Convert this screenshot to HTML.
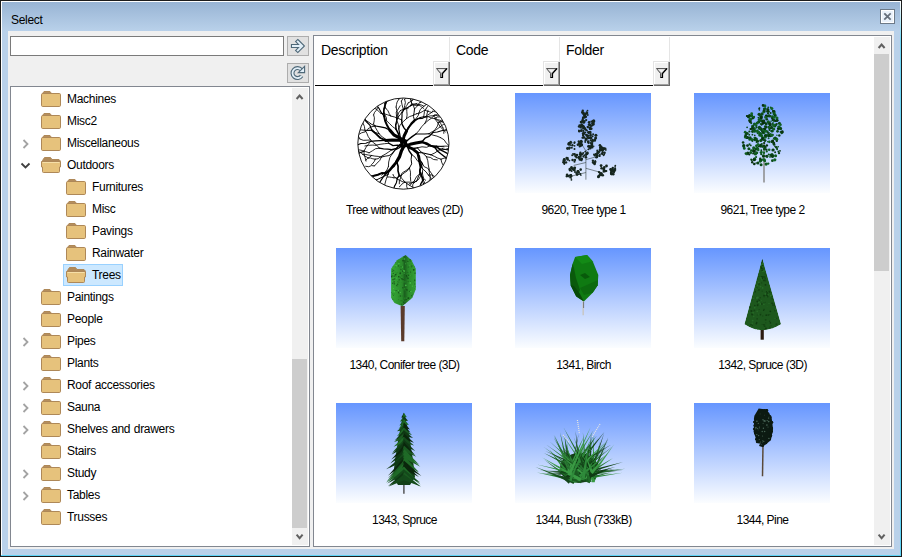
<!DOCTYPE html>
<html><head><meta charset="utf-8">
<style>
*{box-sizing:border-box;margin:0;padding:0}
html,body{width:902px;height:557px;overflow:hidden;background:#1c1c1c;font-family:"Liberation Sans",sans-serif;}
.a{position:absolute}
#win{position:absolute;left:0;top:0;width:902px;height:557px;background:#1c1c1c}
#wl{left:1px;top:1px;width:1px;height:555px;background:#fff}
#wt{left:1px;top:1px;width:900px;height:1px;background:#fff}
#wr{left:900px;top:1px;width:1px;height:555px;background:linear-gradient(#fff,#6fd8f7 40px,#5fd4f7)}
#wb{left:1px;top:555px;width:900px;height:1px;background:#5fd4f7}
#frame{left:2px;top:2px;width:898px;height:553px;background:#b9d1ea}
#title{left:2px;top:2px;width:898px;height:29px;background:linear-gradient(#98b4d4,#b9d1ea)}
#ttext{left:11px;top:13px;font-size:12px;color:#000;line-height:14px;letter-spacing:-0.3px}
#close{left:880px;top:9px;width:15px;height:15px;border:1px solid #6d7a88;background:#eaf2fb;box-shadow:inset 0 0 0 1px #fff}
#panel{left:8px;top:31px;width:886px;height:518px;background:#f0f0f0}
#search{left:10px;top:36px;width:274px;height:20px;border:1px solid #7a7a7a;background:#fff}
.btn{width:22px;height:20px;border:1px solid #adadad;background:#e1e1e1}
#tree{left:10px;top:86px;width:300px;height:461px;border:1px solid #828790;background:#fff}
#list{left:313px;top:35px;width:579px;height:512px;border:1px solid #828790;background:#fff}
.sb{background:#f0f0f0}
.thumb{background:#cdcdcd}
.tl{font-size:12px;line-height:22px;color:#000;white-space:nowrap;letter-spacing:-0.3px;word-spacing:0.5px}
.sel{width:60px;height:22px;background:#cce8ff;border:1px solid #99d1ff}
.hd{font-size:14px;line-height:16px;color:#000;white-space:nowrap;letter-spacing:-0.3px}
.sep{width:1px;background:#e5e5e5}
.hl{height:1px;background:#000}
.flt{width:17px;height:25px;background:#f0f0f0;border-left:1px solid #e3e3e3;border-top:1px solid #e3e3e3;box-shadow:inset -1px -1px 0 #696969, inset -2px -2px 0 #a0a0a0, inset 1px 1px 0 #fff}
.cap{font-size:12px;line-height:13px;color:#000;white-space:nowrap;text-align:center;width:179px;letter-spacing:-0.55px}
.img{width:136px;height:100px;background:linear-gradient(#6696ff,#fbfdff)}
.chev{fill:none;stroke:#606060;stroke-width:2}
</style></head><body>
<svg width="0" height="0" style="position:absolute">
<defs>
<symbol id="fc" viewBox="0 0 20 16">
<path d="M1.5 2.5 L3 0.5 H9 L10.5 2.5 Z" fill="#b58e5e" stroke="#ae8858" stroke-width="1" stroke-linejoin="round"/>
<rect x="0.5" y="2.5" width="19" height="13" rx="1.2" fill="#e6c27c" stroke="#ae8858"/>
</symbol>
<symbol id="fo" viewBox="0 0 20 16">
<path d="M1.5 3.5 L3.5 0.5 H9.5 L11 2.5 H18 L19 3.5 V6 H1 Z" fill="#b08a5a" stroke="#ae8858" stroke-width="1" stroke-linejoin="round"/>
<path d="M0.5 4.5 H19.5 V10 H18.5 V14.5 Q18.5 15.5 17.5 15.5 H2.5 Q1.5 15.5 1.5 14.5 V10 H0.5 Z" fill="#e6c27c" stroke="#ae8858"/>
<path d="M1.5 5.5 H18.5" stroke="#f6dfa8" stroke-width="1"/>
</symbol>
<symbol id="funnel" viewBox="0 0 17 25">
<path d="M3.5 7.5 H14 L9.5 12.5 V16.5 H7.5 V12.5 Z" fill="#a8a8a8" stroke="#4a4a4a" stroke-width="0.9" stroke-linejoin="miter"/>
<path d="M4.8 8.2 H12 L8.6 11.8 Z" fill="#f4f4f4"/>
<path d="M14 7.5 L9.5 12.5 V16.5 H7.5" fill="none" stroke="#000" stroke-width="1.2"/>
</symbol>
</defs>
</svg>
<div id="win">
<div class="a" id="frame"></div>
<div class="a" id="title"></div>
<div class="a" id="wl"></div><div class="a" id="wt"></div><div class="a" id="wr"></div><div class="a" id="wb"></div>
<div class="a" id="ttext">Select</div>
<div class="a" id="close"></div>
<svg class="a" style="left:880px;top:9px" width="15" height="15"><path d="M4.9 4.9 L10.1 10.1 M10.1 4.9 L4.9 10.1" stroke="#66707c" stroke-width="1.8" stroke-linecap="square"/></svg>
<div class="a" id="panel"></div>
<div class="a" id="search"></div>
<div class="a btn" style="left:287px;top:36px"></div>
<svg class="a" style="left:287px;top:36px" width="22" height="20">
<path d="M6 10 H14.5 M10.8 5.6 L15.2 10 L10.8 14.4" fill="none" stroke="#4e6878" stroke-width="4.2" stroke-linejoin="miter" stroke-linecap="square"/>
<path d="M6 10 H14.5 M10.8 5.6 L15.2 10 L10.8 14.4" fill="none" stroke="#e2eff8" stroke-width="2" stroke-linejoin="miter" stroke-linecap="square"/>
</svg>
<div class="a btn" style="left:287px;top:63px"></div>
<svg class="a" style="left:287px;top:63px" width="22" height="20">
<path d="M14.3 6.8 A5 5 0 1 0 14.6 12.9" fill="none" stroke="#4e6878" stroke-width="4"/>
<path d="M14.3 6.8 A5 5 0 1 0 14.6 12.9" fill="none" stroke="#e2eff8" stroke-width="1.8"/>
<path d="M11.3 9.6 H17.6 V3.3 Z" fill="#e2eff8" stroke="#4e6878" stroke-width="1.1" stroke-linejoin="miter"/>
</svg>
<div class="a" id="tree"></div>
<div class="a sb" style="left:292px;top:88px;width:16px;height:457px"></div>
<div class="a thumb" style="left:292px;top:359px;width:15px;height:169px"></div>
<svg class="a" style="left:292px;top:88px" width="16" height="17"><path class="chev" d="M4.6 11 L7.6 7.5 L10.6 11"/></svg>
<svg class="a" style="left:292px;top:528px" width="16" height="17"><path class="chev" d="M4.6 6.6 L7.6 10.1 L10.6 6.6"/></svg>
<svg class="a" style="left:41px;top:91px" width="20" height="16"><use href="#fc"/></svg>
<div class="a tl" style="left:67px;top:88px">Machines</div>
<svg class="a" style="left:41px;top:113px" width="20" height="16"><use href="#fc"/></svg>
<div class="a tl" style="left:67px;top:110px">Misc2</div>
<svg class="a" style="left:21px;top:138px" width="10" height="12"><path d="M2.5 2 L6.5 6 L2.5 10" fill="none" stroke="#a3a3a3" stroke-width="1.8"/></svg>
<svg class="a" style="left:41px;top:135px" width="20" height="16"><use href="#fc"/></svg>
<div class="a tl" style="left:67px;top:132px">Miscellaneous</div>
<svg class="a" style="left:20px;top:161px" width="12" height="10"><path d="M1.5 2.5 L5.5 6.5 L9.5 2.5" fill="none" stroke="#404040" stroke-width="1.8"/></svg>
<svg class="a" style="left:41px;top:157px" width="20" height="16"><use href="#fo"/></svg>
<div class="a tl" style="left:67px;top:154px">Outdoors</div>
<svg class="a" style="left:66px;top:179px" width="20" height="16"><use href="#fc"/></svg>
<div class="a tl" style="left:92px;top:176px">Furnitures</div>
<svg class="a" style="left:66px;top:201px" width="20" height="16"><use href="#fc"/></svg>
<div class="a tl" style="left:92px;top:198px">Misc</div>
<svg class="a" style="left:66px;top:223px" width="20" height="16"><use href="#fc"/></svg>
<div class="a tl" style="left:92px;top:220px">Pavings</div>
<svg class="a" style="left:66px;top:245px" width="20" height="16"><use href="#fc"/></svg>
<div class="a tl" style="left:92px;top:242px">Rainwater</div>
<div class="a sel" style="left:63px;top:264px"></div>
<svg class="a" style="left:66px;top:267px" width="20" height="16"><use href="#fo"/></svg>
<div class="a tl" style="left:92px;top:264px">Trees</div>
<svg class="a" style="left:41px;top:289px" width="20" height="16"><use href="#fc"/></svg>
<div class="a tl" style="left:67px;top:286px">Paintings</div>
<svg class="a" style="left:41px;top:311px" width="20" height="16"><use href="#fc"/></svg>
<div class="a tl" style="left:67px;top:308px">People</div>
<svg class="a" style="left:21px;top:336px" width="10" height="12"><path d="M2.5 2 L6.5 6 L2.5 10" fill="none" stroke="#a3a3a3" stroke-width="1.8"/></svg>
<svg class="a" style="left:41px;top:333px" width="20" height="16"><use href="#fc"/></svg>
<div class="a tl" style="left:67px;top:330px">Pipes</div>
<svg class="a" style="left:41px;top:355px" width="20" height="16"><use href="#fc"/></svg>
<div class="a tl" style="left:67px;top:352px">Plants</div>
<svg class="a" style="left:21px;top:380px" width="10" height="12"><path d="M2.5 2 L6.5 6 L2.5 10" fill="none" stroke="#a3a3a3" stroke-width="1.8"/></svg>
<svg class="a" style="left:41px;top:377px" width="20" height="16"><use href="#fc"/></svg>
<div class="a tl" style="left:67px;top:374px">Roof accessories</div>
<svg class="a" style="left:21px;top:402px" width="10" height="12"><path d="M2.5 2 L6.5 6 L2.5 10" fill="none" stroke="#a3a3a3" stroke-width="1.8"/></svg>
<svg class="a" style="left:41px;top:399px" width="20" height="16"><use href="#fc"/></svg>
<div class="a tl" style="left:67px;top:396px">Sauna</div>
<svg class="a" style="left:21px;top:424px" width="10" height="12"><path d="M2.5 2 L6.5 6 L2.5 10" fill="none" stroke="#a3a3a3" stroke-width="1.8"/></svg>
<svg class="a" style="left:41px;top:421px" width="20" height="16"><use href="#fc"/></svg>
<div class="a tl" style="left:67px;top:418px">Shelves and drawers</div>
<svg class="a" style="left:41px;top:443px" width="20" height="16"><use href="#fc"/></svg>
<div class="a tl" style="left:67px;top:440px">Stairs</div>
<svg class="a" style="left:21px;top:468px" width="10" height="12"><path d="M2.5 2 L6.5 6 L2.5 10" fill="none" stroke="#a3a3a3" stroke-width="1.8"/></svg>
<svg class="a" style="left:41px;top:465px" width="20" height="16"><use href="#fc"/></svg>
<div class="a tl" style="left:67px;top:462px">Study</div>
<svg class="a" style="left:21px;top:490px" width="10" height="12"><path d="M2.5 2 L6.5 6 L2.5 10" fill="none" stroke="#a3a3a3" stroke-width="1.8"/></svg>
<svg class="a" style="left:41px;top:487px" width="20" height="16"><use href="#fc"/></svg>
<div class="a tl" style="left:67px;top:484px">Tables</div>
<svg class="a" style="left:41px;top:509px" width="20" height="16"><use href="#fc"/></svg>
<div class="a tl" style="left:67px;top:506px">Trusses</div>
<div class="a" id="list"></div>
<div class="a sb" style="left:874px;top:37px;width:16px;height:508px"></div>
<div class="a thumb" style="left:874px;top:54px;width:15px;height:217px"></div>
<svg class="a" style="left:874px;top:37px" width="16" height="17"><path class="chev" d="M4.6 11 L7.6 7.5 L10.6 11"/></svg>
<svg class="a" style="left:874px;top:528px" width="16" height="17"><path class="chev" d="M4.6 6.6 L7.6 10.1 L10.6 6.6"/></svg>
<!-- header -->
<div class="a hd" style="left:321px;top:42px">Description</div>
<div class="a hd" style="left:456px;top:42px">Code</div>
<div class="a hd" style="left:566px;top:42px">Folder</div>
<div class="a sep" style="left:449px;top:37px;height:24px"></div>
<div class="a sep" style="left:559px;top:37px;height:24px"></div>
<div class="a sep" style="left:669px;top:37px;height:24px"></div>
<div class="a hl" style="left:315px;top:85px;width:354px"></div>
<div class="a flt" style="left:433px;top:61px"></div>
<svg class="a" style="left:433px;top:61px" width="17" height="25"><use href="#funnel"/></svg>
<div class="a flt" style="left:543px;top:61px"></div>
<svg class="a" style="left:543px;top:61px" width="17" height="25"><use href="#funnel"/></svg>
<div class="a flt" style="left:653px;top:61px"></div>
<svg class="a" style="left:653px;top:61px" width="17" height="25"><use href="#funnel"/></svg>
<svg class="a img0" style="left:336px;top:93px" width="136" height="100"><g transform="translate(18,1)"><clipPath id="cc"><circle cx="49.4" cy="49.6" r="45.4"/></clipPath><g clip-path="url(#cc)"><polyline points="50.2,46.8 45.1,43.7 39.8,40.8 35.9,36.2" fill="none" stroke="#000" stroke-width="3.20" stroke-linejoin="round" stroke-linecap="round"/><polyline points="35.9,36.2 33.3,31.8 31.2,27.1 30.1,22.1" fill="none" stroke="#000" stroke-width="1.99" stroke-linejoin="round" stroke-linecap="round"/><polyline points="30.1,22.1 29.7,17.6 30.5,13.1 32.0,8.8" fill="none" stroke="#000" stroke-width="1.52" stroke-linejoin="round" stroke-linecap="round"/><polyline points="32.0,8.8 33.8,5.5 37.1,3.6 39.3,0.5" fill="none" stroke="#000" stroke-width="1.17" stroke-linejoin="round" stroke-linecap="round"/><polyline points="32.0,8.8 31.6,4.5 31.8,0.1 31.7,-4.3" fill="none" stroke="#000" stroke-width="0.85" stroke-linejoin="round" stroke-linecap="round"/><polyline points="30.1,22.1 27.4,18.7 25.3,14.9 22.8,11.4" fill="none" stroke="#000" stroke-width="1.08" stroke-linejoin="round" stroke-linecap="round"/><polyline points="22.8,11.4 21.5,8.3 20.4,5.2 18.8,2.3" fill="none" stroke="#000" stroke-width="0.85" stroke-linejoin="round" stroke-linecap="round"/><polyline points="22.8,11.4 19.9,9.4 16.6,8.0 13.3,6.6" fill="none" stroke="#000" stroke-width="0.85" stroke-linejoin="round" stroke-linecap="round"/><polyline points="22.8,11.4 21.7,7.3 20.4,3.2 18.0,-0.3" fill="none" stroke="#000" stroke-width="0.85" stroke-linejoin="round" stroke-linecap="round"/><polyline points="35.9,36.2 31.4,33.9 26.5,32.8 21.5,32.0" fill="none" stroke="#000" stroke-width="1.22" stroke-linejoin="round" stroke-linecap="round"/><polyline points="21.5,32.0 17.7,30.4 14.4,28.0 11.0,25.7" fill="none" stroke="#000" stroke-width="0.97" stroke-linejoin="round" stroke-linecap="round"/><polyline points="11.0,25.7 10.9,22.3 10.1,19.0 10.6,15.7" fill="none" stroke="#000" stroke-width="0.85" stroke-linejoin="round" stroke-linecap="round"/><polyline points="11.0,25.7 7.8,24.6 4.5,24.2 1.4,23.1" fill="none" stroke="#000" stroke-width="0.85" stroke-linejoin="round" stroke-linecap="round"/><polyline points="21.5,32.0 17.4,32.8 13.9,34.8 11.1,37.8" fill="none" stroke="#000" stroke-width="0.85" stroke-linejoin="round" stroke-linecap="round"/><polyline points="11.1,37.8 7.4,38.9 4.1,40.9 0.4,42.1" fill="none" stroke="#000" stroke-width="0.85" stroke-linejoin="round" stroke-linecap="round"/><polyline points="51.6,46.7 44.9,46.2 38.3,46.0 31.6,46.4" fill="none" stroke="#000" stroke-width="3.00" stroke-linejoin="round" stroke-linecap="round"/><polyline points="31.6,46.4 26.4,44.0 22.3,40.1 17.9,36.3" fill="none" stroke="#000" stroke-width="1.88" stroke-linejoin="round" stroke-linecap="round"/><polyline points="17.9,36.3 15.8,31.1 11.9,27.2 9.0,22.4" fill="none" stroke="#000" stroke-width="1.21" stroke-linejoin="round" stroke-linecap="round"/><polyline points="17.9,36.3 12.5,36.5 7.2,35.9 1.8,36.2" fill="none" stroke="#000" stroke-width="0.85" stroke-linejoin="round" stroke-linecap="round"/><polyline points="31.6,46.4 26.6,46.6 21.5,46.9 16.5,47.4" fill="none" stroke="#000" stroke-width="1.24" stroke-linejoin="round" stroke-linecap="round"/><polyline points="16.5,47.4 11.9,49.2 6.9,49.5 2.3,51.3" fill="none" stroke="#000" stroke-width="1.02" stroke-linejoin="round" stroke-linecap="round"/><polyline points="16.5,47.4 14.2,50.6 11.8,53.7 10.0,57.2" fill="none" stroke="#000" stroke-width="0.85" stroke-linejoin="round" stroke-linecap="round"/><polyline points="10.0,57.2 6.7,58.3 4.0,60.6 1.2,62.6" fill="none" stroke="#000" stroke-width="0.85" stroke-linejoin="round" stroke-linecap="round"/><polyline points="10.0,57.2 10.1,60.6 11.2,63.8 12.0,67.1" fill="none" stroke="#000" stroke-width="0.85" stroke-linejoin="round" stroke-linecap="round"/><polyline points="10.0,57.2 7.3,58.5 4.3,59.0 1.6,60.4" fill="none" stroke="#000" stroke-width="0.85" stroke-linejoin="round" stroke-linecap="round"/><polyline points="47.2,52.2 48.8,47.1 50.1,42.0 52.5,37.2" fill="none" stroke="#000" stroke-width="3.00" stroke-linejoin="round" stroke-linecap="round"/><polyline points="52.5,37.2 54.9,33.3 57.3,29.4 60.5,26.1" fill="none" stroke="#000" stroke-width="1.87" stroke-linejoin="round" stroke-linecap="round"/><polyline points="60.5,26.1 64.1,24.6 68.0,24.5 71.5,22.8" fill="none" stroke="#000" stroke-width="1.17" stroke-linejoin="round" stroke-linecap="round"/><polyline points="71.5,22.8 74.6,22.8 77.5,24.2 80.7,24.6" fill="none" stroke="#000" stroke-width="0.85" stroke-linejoin="round" stroke-linecap="round"/><polyline points="80.7,24.6 82.6,27.1 84.4,29.8 86.2,32.5" fill="none" stroke="#000" stroke-width="0.85" stroke-linejoin="round" stroke-linecap="round"/><polyline points="86.2,32.5 87.7,34.5 89.7,36.1 91.3,38.1" fill="none" stroke="#000" stroke-width="0.85" stroke-linejoin="round" stroke-linecap="round"/><polyline points="80.7,24.6 83.2,23.0 86.3,22.9 88.8,21.1" fill="none" stroke="#000" stroke-width="0.85" stroke-linejoin="round" stroke-linecap="round"/><polyline points="80.7,24.6 83.4,25.6 86.3,26.3 88.4,28.3" fill="none" stroke="#000" stroke-width="0.85" stroke-linejoin="round" stroke-linecap="round"/><polyline points="71.5,22.8 73.9,20.8 76.6,19.3 78.9,17.1" fill="none" stroke="#000" stroke-width="0.85" stroke-linejoin="round" stroke-linecap="round"/><polyline points="78.9,17.1 81.5,17.9 84.1,18.8 86.7,17.9" fill="none" stroke="#000" stroke-width="0.85" stroke-linejoin="round" stroke-linecap="round"/><polyline points="60.5,26.1 59.4,22.4 60.1,18.6 60.5,14.8" fill="none" stroke="#000" stroke-width="0.98" stroke-linejoin="round" stroke-linecap="round"/><polyline points="60.5,14.8 62.7,12.9 64.1,10.4 66.1,8.3" fill="none" stroke="#000" stroke-width="0.85" stroke-linejoin="round" stroke-linecap="round"/><polyline points="66.1,8.3 67.9,7.0 69.6,5.5 71.5,4.3" fill="none" stroke="#000" stroke-width="0.85" stroke-linejoin="round" stroke-linecap="round"/><polyline points="66.1,8.3 68.8,7.4 70.6,5.3 73.0,3.7" fill="none" stroke="#000" stroke-width="0.85" stroke-linejoin="round" stroke-linecap="round"/><polyline points="60.5,14.8 59.3,11.3 57.3,8.3 56.3,4.8" fill="none" stroke="#000" stroke-width="0.85" stroke-linejoin="round" stroke-linecap="round"/><polyline points="52.5,37.2 50.0,33.8 48.0,30.1 47.7,25.9" fill="none" stroke="#000" stroke-width="1.40" stroke-linejoin="round" stroke-linecap="round"/><polyline points="47.7,25.9 48.0,22.6 48.0,19.2 49.5,16.2" fill="none" stroke="#000" stroke-width="1.15" stroke-linejoin="round" stroke-linecap="round"/><polyline points="49.5,16.2 51.8,14.8 53.9,13.2 56.2,11.9" fill="none" stroke="#000" stroke-width="0.87" stroke-linejoin="round" stroke-linecap="round"/><polyline points="56.2,11.9 58.6,11.1 61.0,11.3 63.5,11.3" fill="none" stroke="#000" stroke-width="0.85" stroke-linejoin="round" stroke-linecap="round"/><polyline points="63.5,11.3 65.9,11.6 67.7,13.0 69.6,14.4" fill="none" stroke="#000" stroke-width="0.85" stroke-linejoin="round" stroke-linecap="round"/><polyline points="56.2,11.9 57.5,9.9 57.5,7.6 58.9,5.7" fill="none" stroke="#000" stroke-width="0.85" stroke-linejoin="round" stroke-linecap="round"/><polyline points="58.9,5.7 60.3,4.5 62.0,3.8 63.3,2.5" fill="none" stroke="#000" stroke-width="0.85" stroke-linejoin="round" stroke-linecap="round"/><polyline points="56.2,11.9 58.1,10.3 60.6,10.2 62.9,9.4" fill="none" stroke="#000" stroke-width="0.85" stroke-linejoin="round" stroke-linecap="round"/><polyline points="49.5,16.2 48.7,13.2 47.9,10.1 47.4,7.0" fill="none" stroke="#000" stroke-width="0.85" stroke-linejoin="round" stroke-linecap="round"/><polyline points="47.4,7.0 48.8,4.8 49.8,2.3 51.2,0.0" fill="none" stroke="#000" stroke-width="0.85" stroke-linejoin="round" stroke-linecap="round"/><polyline points="49.5,16.2 51.1,13.8 52.8,11.4 54.2,8.9" fill="none" stroke="#000" stroke-width="0.85" stroke-linejoin="round" stroke-linecap="round"/><polyline points="54.2,8.9 56.7,7.6 58.3,5.3 59.9,2.9" fill="none" stroke="#000" stroke-width="0.85" stroke-linejoin="round" stroke-linecap="round"/><polyline points="47.7,25.9 44.1,24.4 40.5,23.0 36.8,22.0" fill="none" stroke="#000" stroke-width="0.85" stroke-linejoin="round" stroke-linecap="round"/><polyline points="36.8,22.0 35.2,19.5 34.0,16.8 32.0,14.6" fill="none" stroke="#000" stroke-width="0.85" stroke-linejoin="round" stroke-linecap="round"/><polyline points="32.0,14.6 30.9,12.1 31.3,9.5 31.7,6.8" fill="none" stroke="#000" stroke-width="0.85" stroke-linejoin="round" stroke-linecap="round"/><polyline points="36.8,22.0 33.6,20.8 30.3,19.8 26.8,19.4" fill="none" stroke="#000" stroke-width="0.85" stroke-linejoin="round" stroke-linecap="round"/><polyline points="26.8,19.4 24.7,17.2 22.3,15.2 19.6,13.8" fill="none" stroke="#000" stroke-width="0.85" stroke-linejoin="round" stroke-linecap="round"/><polyline points="52.5,37.2 54.4,33.4 57.3,30.5 60.3,27.6" fill="none" stroke="#000" stroke-width="1.37" stroke-linejoin="round" stroke-linecap="round"/><polyline points="60.3,27.6 63.1,25.3 66.2,23.5 69.7,22.8" fill="none" stroke="#000" stroke-width="1.01" stroke-linejoin="round" stroke-linecap="round"/><polyline points="69.7,22.8 73.0,22.8 76.3,21.9 79.7,21.8" fill="none" stroke="#000" stroke-width="0.85" stroke-linejoin="round" stroke-linecap="round"/><polyline points="79.7,21.8 81.5,24.1 83.6,26.0 85.6,28.1" fill="none" stroke="#000" stroke-width="0.85" stroke-linejoin="round" stroke-linecap="round"/><polyline points="85.6,28.1 86.9,29.8 87.7,31.8 88.9,33.7" fill="none" stroke="#000" stroke-width="0.85" stroke-linejoin="round" stroke-linecap="round"/><polyline points="88.9,33.7 89.6,35.5 89.8,37.5 89.8,39.4" fill="none" stroke="#000" stroke-width="0.85" stroke-linejoin="round" stroke-linecap="round"/><polyline points="85.6,28.1 87.9,27.7 90.2,27.2 92.5,27.5" fill="none" stroke="#000" stroke-width="0.85" stroke-linejoin="round" stroke-linecap="round"/><polyline points="79.7,21.8 82.5,20.6 85.1,19.1 87.9,17.8" fill="none" stroke="#000" stroke-width="0.85" stroke-linejoin="round" stroke-linecap="round"/><polyline points="69.7,22.8 70.1,20.1 70.5,17.5 71.9,15.1" fill="none" stroke="#000" stroke-width="0.85" stroke-linejoin="round" stroke-linecap="round"/><polyline points="71.9,15.1 73.2,12.9 75.1,11.2 77.1,9.7" fill="none" stroke="#000" stroke-width="0.85" stroke-linejoin="round" stroke-linecap="round"/><polyline points="60.3,27.6 62.0,24.5 64.1,21.8 65.1,18.5" fill="none" stroke="#000" stroke-width="0.85" stroke-linejoin="round" stroke-linecap="round"/><polyline points="65.1,18.5 66.2,15.6 68.5,13.4 71.0,11.5" fill="none" stroke="#000" stroke-width="0.85" stroke-linejoin="round" stroke-linecap="round"/><polyline points="71.0,11.5 73.2,9.5 75.5,7.6 77.7,5.7" fill="none" stroke="#000" stroke-width="0.85" stroke-linejoin="round" stroke-linecap="round"/><polyline points="50.2,51.6 47.4,56.9 45.6,62.6 42.6,67.8" fill="none" stroke="#000" stroke-width="3.20" stroke-linejoin="round" stroke-linecap="round"/><polyline points="42.6,67.8 39.2,71.8 35.9,76.0 31.8,79.3" fill="none" stroke="#000" stroke-width="2.57" stroke-linejoin="round" stroke-linecap="round"/><polyline points="31.8,79.3 27.7,79.1 23.9,80.7 19.9,81.7" fill="none" stroke="#000" stroke-width="2.07" stroke-linejoin="round" stroke-linecap="round"/><polyline points="19.9,81.7 16.0,81.8 12.0,81.8 8.4,80.2" fill="none" stroke="#000" stroke-width="1.26" stroke-linejoin="round" stroke-linecap="round"/><polyline points="19.9,81.7 17.2,84.4 15.0,87.5 11.4,88.6" fill="none" stroke="#000" stroke-width="1.09" stroke-linejoin="round" stroke-linecap="round"/><polyline points="31.8,79.3 29.1,83.1 26.6,87.0 24.3,91.0" fill="none" stroke="#000" stroke-width="1.27" stroke-linejoin="round" stroke-linecap="round"/><polyline points="42.6,67.8 44.1,72.2 44.0,76.9 45.2,81.3" fill="none" stroke="#000" stroke-width="1.63" stroke-linejoin="round" stroke-linecap="round"/><polyline points="45.2,81.3 43.2,84.8 42.4,88.7 40.5,92.2" fill="none" stroke="#000" stroke-width="1.19" stroke-linejoin="round" stroke-linecap="round"/><polyline points="40.5,92.2 39.2,95.1 37.1,97.4 34.6,99.4" fill="none" stroke="#000" stroke-width="0.85" stroke-linejoin="round" stroke-linecap="round"/><polyline points="40.5,92.2 40.0,95.6 38.8,98.9 38.7,102.3" fill="none" stroke="#000" stroke-width="0.85" stroke-linejoin="round" stroke-linecap="round"/><polyline points="45.2,81.3 47.6,84.2 50.0,87.0 52.8,89.5" fill="none" stroke="#000" stroke-width="0.85" stroke-linejoin="round" stroke-linecap="round"/><polyline points="52.8,89.5 52.7,92.7 54.0,95.8 53.5,99.1" fill="none" stroke="#000" stroke-width="0.85" stroke-linejoin="round" stroke-linecap="round"/><polyline points="52.8,89.5 55.5,91.3 58.3,93.0 61.4,94.2" fill="none" stroke="#000" stroke-width="0.85" stroke-linejoin="round" stroke-linecap="round"/><polyline points="42.6,67.8 40.1,72.5 35.7,75.6 33.9,80.6" fill="none" stroke="#000" stroke-width="1.22" stroke-linejoin="round" stroke-linecap="round"/><polyline points="33.9,80.6 29.9,82.3 26.0,84.2 22.2,86.1" fill="none" stroke="#000" stroke-width="0.97" stroke-linejoin="round" stroke-linecap="round"/><polyline points="22.2,86.1 18.5,84.8 15.0,83.1 11.7,81.0" fill="none" stroke="#000" stroke-width="0.85" stroke-linejoin="round" stroke-linecap="round"/><polyline points="22.2,86.1 20.1,89.5 17.9,92.8 16.0,96.2" fill="none" stroke="#000" stroke-width="0.85" stroke-linejoin="round" stroke-linecap="round"/><polyline points="22.2,86.1 18.5,87.3 14.9,88.7 11.0,88.8" fill="none" stroke="#000" stroke-width="0.85" stroke-linejoin="round" stroke-linecap="round"/><polyline points="33.9,80.6 32.2,85.2 30.9,90.0 30.2,94.8" fill="none" stroke="#000" stroke-width="0.85" stroke-linejoin="round" stroke-linecap="round"/><polyline points="50.4,52.2 56.1,50.3 61.9,49.0 67.8,48.0" fill="none" stroke="#000" stroke-width="3.00" stroke-linejoin="round" stroke-linecap="round"/><polyline points="67.8,48.0 72.5,49.1 76.6,51.5 80.9,53.4" fill="none" stroke="#000" stroke-width="1.85" stroke-linejoin="round" stroke-linecap="round"/><polyline points="80.9,53.4 83.4,57.0 86.8,59.8 90.3,62.5" fill="none" stroke="#000" stroke-width="1.43" stroke-linejoin="round" stroke-linecap="round"/><polyline points="90.3,62.5 92.9,65.0 95.8,67.2 97.0,70.6" fill="none" stroke="#000" stroke-width="1.01" stroke-linejoin="round" stroke-linecap="round"/><polyline points="90.3,62.5 94.3,64.1 98.6,64.8 102.9,64.3" fill="none" stroke="#000" stroke-width="0.85" stroke-linejoin="round" stroke-linecap="round"/><polyline points="80.9,53.4 85.0,54.2 88.8,55.7 92.9,55.2" fill="none" stroke="#000" stroke-width="0.93" stroke-linejoin="round" stroke-linecap="round"/><polyline points="92.9,55.2 95.6,56.8 98.4,58.4 100.7,60.5" fill="none" stroke="#000" stroke-width="0.85" stroke-linejoin="round" stroke-linecap="round"/><polyline points="92.9,55.2 95.8,52.8 99.5,51.9 103.1,50.7" fill="none" stroke="#000" stroke-width="0.85" stroke-linejoin="round" stroke-linecap="round"/><polyline points="67.8,48.0 71.0,44.2 75.5,42.1 78.9,38.5" fill="none" stroke="#000" stroke-width="1.32" stroke-linejoin="round" stroke-linecap="round"/><polyline points="78.9,38.5 83.3,37.9 87.5,36.7 91.8,36.0" fill="none" stroke="#000" stroke-width="1.01" stroke-linejoin="round" stroke-linecap="round"/><polyline points="91.8,36.0 94.9,37.7 97.5,40.1 100.7,41.6" fill="none" stroke="#000" stroke-width="0.85" stroke-linejoin="round" stroke-linecap="round"/><polyline points="91.8,36.0 95.5,33.7 98.6,30.5 101.4,27.2" fill="none" stroke="#000" stroke-width="0.85" stroke-linejoin="round" stroke-linecap="round"/><polyline points="78.9,38.5 81.2,35.4 83.4,32.2 84.5,28.6" fill="none" stroke="#000" stroke-width="0.85" stroke-linejoin="round" stroke-linecap="round"/><polyline points="84.5,28.6 87.4,26.5 89.9,23.9 93.2,22.5" fill="none" stroke="#000" stroke-width="0.85" stroke-linejoin="round" stroke-linecap="round"/><polyline points="67.8,48.0 72.6,50.2 77.4,52.3 82.7,52.4" fill="none" stroke="#000" stroke-width="1.60" stroke-linejoin="round" stroke-linecap="round"/><polyline points="82.7,52.4 85.8,55.7 90.0,57.7 94.2,59.8" fill="none" stroke="#000" stroke-width="1.34" stroke-linejoin="round" stroke-linecap="round"/><polyline points="94.2,59.8 95.0,63.3 96.4,66.6 97.3,70.2" fill="none" stroke="#000" stroke-width="0.97" stroke-linejoin="round" stroke-linecap="round"/><polyline points="94.2,59.8 98.0,59.3 101.7,60.2 105.5,60.8" fill="none" stroke="#000" stroke-width="0.85" stroke-linejoin="round" stroke-linecap="round"/><polyline points="82.7,52.4 86.7,52.3 90.7,52.1 94.7,52.2" fill="none" stroke="#000" stroke-width="0.85" stroke-linejoin="round" stroke-linecap="round"/><polyline points="94.7,52.2 98.5,53.5 102.4,53.6 106.2,55.0" fill="none" stroke="#000" stroke-width="0.85" stroke-linejoin="round" stroke-linecap="round"/><polyline points="94.7,52.2 97.5,49.5 100.5,47.0 103.4,44.4" fill="none" stroke="#000" stroke-width="0.85" stroke-linejoin="round" stroke-linecap="round"/><polyline points="50.7,49.1 54.4,52.9 59.2,55.3 63.4,58.6" fill="none" stroke="#000" stroke-width="2.80" stroke-linejoin="round" stroke-linecap="round"/><polyline points="63.4,58.6 64.5,63.3 65.5,68.1 66.6,72.8" fill="none" stroke="#000" stroke-width="2.16" stroke-linejoin="round" stroke-linecap="round"/><polyline points="66.6,72.8 65.8,77.3 67.5,81.5 69.2,85.8" fill="none" stroke="#000" stroke-width="1.69" stroke-linejoin="round" stroke-linecap="round"/><polyline points="69.2,85.8 67.0,89.5 65.8,93.6 63.1,96.9" fill="none" stroke="#000" stroke-width="1.43" stroke-linejoin="round" stroke-linecap="round"/><polyline points="69.2,85.8 71.0,89.6 74.7,91.8 76.7,95.4" fill="none" stroke="#000" stroke-width="0.85" stroke-linejoin="round" stroke-linecap="round"/><polyline points="66.6,72.8 69.4,75.4 72.2,78.1 74.5,81.1" fill="none" stroke="#000" stroke-width="0.92" stroke-linejoin="round" stroke-linecap="round"/><polyline points="74.5,81.1 76.8,83.7 77.8,87.0 80.3,89.4" fill="none" stroke="#000" stroke-width="0.85" stroke-linejoin="round" stroke-linecap="round"/><polyline points="74.5,81.1 77.6,80.9 80.4,82.3 83.0,83.9" fill="none" stroke="#000" stroke-width="0.85" stroke-linejoin="round" stroke-linecap="round"/><polyline points="63.4,58.6 68.0,58.8 72.5,59.7 76.9,60.8" fill="none" stroke="#000" stroke-width="1.07" stroke-linejoin="round" stroke-linecap="round"/><polyline points="76.9,60.8 80.3,62.3 83.5,64.0 87.0,65.2" fill="none" stroke="#000" stroke-width="0.87" stroke-linejoin="round" stroke-linecap="round"/><polyline points="87.0,65.2 87.6,68.1 88.9,70.9 90.9,73.2" fill="none" stroke="#000" stroke-width="0.85" stroke-linejoin="round" stroke-linecap="round"/><polyline points="87.0,65.2 90.2,64.1 93.7,64.4 97.1,64.4" fill="none" stroke="#000" stroke-width="0.85" stroke-linejoin="round" stroke-linecap="round"/><polyline points="76.9,60.8 80.9,58.9 84.4,56.4 88.4,54.6" fill="none" stroke="#000" stroke-width="0.85" stroke-linejoin="round" stroke-linecap="round"/><polyline points="88.4,54.6 92.2,55.7 96.2,56.3 100.0,57.5" fill="none" stroke="#000" stroke-width="0.85" stroke-linejoin="round" stroke-linecap="round"/><polyline points="63.4,58.6 65.4,62.2 66.1,66.3 68.4,69.7" fill="none" stroke="#000" stroke-width="1.39" stroke-linejoin="round" stroke-linecap="round"/><polyline points="68.4,69.7 66.9,73.0 65.7,76.4 65.8,80.0" fill="none" stroke="#000" stroke-width="1.17" stroke-linejoin="round" stroke-linecap="round"/><polyline points="65.8,80.0 64.2,83.0 63.1,86.3 60.4,88.3" fill="none" stroke="#000" stroke-width="0.94" stroke-linejoin="round" stroke-linecap="round"/><polyline points="60.4,88.3 57.2,88.2 54.1,88.1 50.9,88.3" fill="none" stroke="#000" stroke-width="0.85" stroke-linejoin="round" stroke-linecap="round"/><polyline points="50.9,88.3 48.2,87.5 45.7,86.3 43.1,85.1" fill="none" stroke="#000" stroke-width="0.85" stroke-linejoin="round" stroke-linecap="round"/><polyline points="43.1,85.1 41.5,83.6 39.7,82.4 39.0,80.4" fill="none" stroke="#000" stroke-width="0.85" stroke-linejoin="round" stroke-linecap="round"/><polyline points="50.9,88.3 48.6,89.3 47.2,91.2 45.3,92.8" fill="none" stroke="#000" stroke-width="0.85" stroke-linejoin="round" stroke-linecap="round"/><polyline points="60.4,88.3 58.7,90.7 58.8,93.6 58.2,96.4" fill="none" stroke="#000" stroke-width="0.85" stroke-linejoin="round" stroke-linecap="round"/><polyline points="65.8,80.0 67.8,82.9 68.4,86.4 69.4,89.7" fill="none" stroke="#000" stroke-width="0.85" stroke-linejoin="round" stroke-linecap="round"/><polyline points="69.4,89.7 69.9,92.5 69.0,95.1 68.8,97.9" fill="none" stroke="#000" stroke-width="0.85" stroke-linejoin="round" stroke-linecap="round"/><polyline points="69.4,89.7 72.4,90.9 74.3,93.3 77.0,94.9" fill="none" stroke="#000" stroke-width="0.85" stroke-linejoin="round" stroke-linecap="round"/><polyline points="65.8,80.0 63.4,81.7 61.7,84.1 60.4,86.7" fill="none" stroke="#000" stroke-width="0.85" stroke-linejoin="round" stroke-linecap="round"/><polyline points="60.4,86.7 58.8,88.4 57.2,90.0 55.6,91.7" fill="none" stroke="#000" stroke-width="0.85" stroke-linejoin="round" stroke-linecap="round"/><polyline points="68.4,69.7 70.3,72.8 73.6,74.2 75.7,77.1" fill="none" stroke="#000" stroke-width="0.85" stroke-linejoin="round" stroke-linecap="round"/><polyline points="75.7,77.1 77.9,79.9 79.2,83.3 80.7,86.5" fill="none" stroke="#000" stroke-width="0.85" stroke-linejoin="round" stroke-linecap="round"/><polyline points="46.8,48.3 45.6,43.7 44.2,39.3 42.0,35.1" fill="none" stroke="#000" stroke-width="1.60" stroke-linejoin="round" stroke-linecap="round"/><polyline points="42.0,35.1 41.5,31.0 42.6,26.9 44.2,23.0" fill="none" stroke="#000" stroke-width="1.14" stroke-linejoin="round" stroke-linecap="round"/><polyline points="44.2,23.0 46.4,20.5 48.1,17.6 50.1,14.8" fill="none" stroke="#000" stroke-width="0.89" stroke-linejoin="round" stroke-linecap="round"/><polyline points="50.1,14.8 52.9,14.0 55.5,12.7 57.8,10.9" fill="none" stroke="#000" stroke-width="0.85" stroke-linejoin="round" stroke-linecap="round"/><polyline points="57.8,10.9 59.8,10.1 62.1,10.2 64.3,10.4" fill="none" stroke="#000" stroke-width="0.85" stroke-linejoin="round" stroke-linecap="round"/><polyline points="64.3,10.4 66.2,10.6 67.9,11.2 69.6,12.1" fill="none" stroke="#000" stroke-width="0.85" stroke-linejoin="round" stroke-linecap="round"/><polyline points="50.1,14.8 50.7,11.6 51.4,8.5 50.6,5.3" fill="none" stroke="#000" stroke-width="0.85" stroke-linejoin="round" stroke-linecap="round"/><polyline points="50.6,5.3 52.6,3.7 54.0,1.6 55.5,-0.5" fill="none" stroke="#000" stroke-width="0.85" stroke-linejoin="round" stroke-linecap="round"/><polyline points="44.2,23.0 43.6,19.7 42.8,16.4 42.1,13.1" fill="none" stroke="#000" stroke-width="0.85" stroke-linejoin="round" stroke-linecap="round"/><polyline points="42.1,13.1 42.5,10.5 43.1,8.0 44.5,5.8" fill="none" stroke="#000" stroke-width="0.85" stroke-linejoin="round" stroke-linecap="round"/><polyline points="44.5,5.8 46.1,4.2 47.6,2.5 49.5,1.3" fill="none" stroke="#000" stroke-width="0.85" stroke-linejoin="round" stroke-linecap="round"/><polyline points="42.0,35.1 38.6,32.7 35.7,29.7 32.6,26.8" fill="none" stroke="#000" stroke-width="0.85" stroke-linejoin="round" stroke-linecap="round"/><polyline points="32.6,26.8 32.4,23.7 30.9,20.9 29.9,17.9" fill="none" stroke="#000" stroke-width="0.85" stroke-linejoin="round" stroke-linecap="round"/><polyline points="29.9,17.9 29.6,14.9 31.0,12.2 30.7,9.3" fill="none" stroke="#000" stroke-width="0.85" stroke-linejoin="round" stroke-linecap="round"/><polyline points="30.7,9.3 32.9,7.7 35.2,6.3 37.1,4.5" fill="none" stroke="#000" stroke-width="0.85" stroke-linejoin="round" stroke-linecap="round"/><polyline points="42.0,35.1 42.0,31.5 42.9,28.0 42.5,24.4" fill="none" stroke="#000" stroke-width="0.85" stroke-linejoin="round" stroke-linecap="round"/><polyline points="42.5,24.4 43.5,21.6 44.6,18.9 46.4,16.6" fill="none" stroke="#000" stroke-width="0.85" stroke-linejoin="round" stroke-linecap="round"/><polyline points="46.4,16.6 48.9,15.4 51.6,14.7 54.3,14.1" fill="none" stroke="#000" stroke-width="0.85" stroke-linejoin="round" stroke-linecap="round"/><polyline points="49.4,48.5 45.5,50.9 42.3,54.4 37.9,55.7" fill="none" stroke="#000" stroke-width="1.50" stroke-linejoin="round" stroke-linecap="round"/><polyline points="37.9,55.7 33.7,55.2 29.5,54.8 25.3,54.2" fill="none" stroke="#000" stroke-width="1.22" stroke-linejoin="round" stroke-linecap="round"/><polyline points="25.3,54.2 22.7,51.1 19.5,48.7 16.6,46.0" fill="none" stroke="#000" stroke-width="0.87" stroke-linejoin="round" stroke-linecap="round"/><polyline points="16.6,46.0 14.3,42.8 12.8,39.2 10.9,35.8" fill="none" stroke="#000" stroke-width="0.85" stroke-linejoin="round" stroke-linecap="round"/><polyline points="10.9,35.8 10.4,32.4 9.1,29.3 8.2,26.1" fill="none" stroke="#000" stroke-width="0.85" stroke-linejoin="round" stroke-linecap="round"/><polyline points="16.6,46.0 12.9,46.2 9.3,46.3 5.9,45.0" fill="none" stroke="#000" stroke-width="0.85" stroke-linejoin="round" stroke-linecap="round"/><polyline points="5.9,45.0 4.2,41.8 1.5,39.5 -0.8,36.7" fill="none" stroke="#000" stroke-width="0.85" stroke-linejoin="round" stroke-linecap="round"/><polyline points="25.3,54.2 21.6,54.7 18.4,56.8 15.1,58.8" fill="none" stroke="#000" stroke-width="0.85" stroke-linejoin="round" stroke-linecap="round"/><polyline points="15.1,58.8 11.7,57.6 8.2,56.5 4.7,55.8" fill="none" stroke="#000" stroke-width="0.85" stroke-linejoin="round" stroke-linecap="round"/><polyline points="37.9,55.7 34.9,57.8 31.9,59.8 28.8,61.6" fill="none" stroke="#000" stroke-width="0.85" stroke-linejoin="round" stroke-linecap="round"/><polyline points="28.8,61.6 26.3,63.0 24.0,64.7 21.2,65.2" fill="none" stroke="#000" stroke-width="0.85" stroke-linejoin="round" stroke-linecap="round"/><polyline points="21.2,65.2 18.8,64.8 16.5,64.0 14.1,64.0" fill="none" stroke="#000" stroke-width="0.85" stroke-linejoin="round" stroke-linecap="round"/><polyline points="14.1,64.0 12.4,62.8 10.5,61.9 9.0,60.4" fill="none" stroke="#000" stroke-width="0.85" stroke-linejoin="round" stroke-linecap="round"/><polyline points="21.2,65.2 20.4,67.3 19.1,69.0 17.5,70.6" fill="none" stroke="#000" stroke-width="0.85" stroke-linejoin="round" stroke-linecap="round"/><polyline points="52.1,47.9 53.4,52.4 55.1,56.8 57.7,60.6" fill="none" stroke="#000" stroke-width="1.50" stroke-linejoin="round" stroke-linecap="round"/><polyline points="57.7,60.6 57.1,65.2 57.7,69.9 55.4,73.9" fill="none" stroke="#000" stroke-width="0.99" stroke-linejoin="round" stroke-linecap="round"/><polyline points="55.4,73.9 53.3,76.9 50.2,78.9 47.4,81.2" fill="none" stroke="#000" stroke-width="0.85" stroke-linejoin="round" stroke-linecap="round"/><polyline points="47.4,81.2 45.0,82.6 42.5,83.8 39.8,83.8" fill="none" stroke="#000" stroke-width="0.85" stroke-linejoin="round" stroke-linecap="round"/><polyline points="39.8,83.8 37.7,83.4 35.6,83.0 33.4,83.0" fill="none" stroke="#000" stroke-width="0.85" stroke-linejoin="round" stroke-linecap="round"/><polyline points="47.4,81.2 46.6,84.1 45.4,86.8 45.3,89.8" fill="none" stroke="#000" stroke-width="0.85" stroke-linejoin="round" stroke-linecap="round"/><polyline points="55.4,73.9 56.5,78.2 56.4,82.6 56.7,87.0" fill="none" stroke="#000" stroke-width="0.85" stroke-linejoin="round" stroke-linecap="round"/><polyline points="55.4,73.9 52.0,76.6 48.3,78.8 46.2,82.5" fill="none" stroke="#000" stroke-width="0.85" stroke-linejoin="round" stroke-linecap="round"/><polyline points="57.7,60.6 61.0,63.1 63.2,66.6 66.6,69.0" fill="none" stroke="#000" stroke-width="0.85" stroke-linejoin="round" stroke-linecap="round"/><polyline points="66.6,69.0 68.0,72.2 68.8,75.5 68.3,78.9" fill="none" stroke="#000" stroke-width="0.85" stroke-linejoin="round" stroke-linecap="round"/><polyline points="68.3,78.9 66.7,81.9 65.0,84.9 62.5,87.3" fill="none" stroke="#000" stroke-width="0.85" stroke-linejoin="round" stroke-linecap="round"/><polyline points="62.5,87.3 60.1,88.2 57.5,88.8 55.1,89.9" fill="none" stroke="#000" stroke-width="0.85" stroke-linejoin="round" stroke-linecap="round"/><polyline points="68.3,78.9 68.9,81.7 69.6,84.4 71.7,86.3" fill="none" stroke="#000" stroke-width="0.85" stroke-linejoin="round" stroke-linecap="round"/><polyline points="51.1,48.8 54.4,45.5 58.1,42.7 61.9,40.0" fill="none" stroke="#000" stroke-width="1.50" stroke-linejoin="round" stroke-linecap="round"/><polyline points="61.9,40.0 66.3,40.1 70.7,40.1 75.0,39.7" fill="none" stroke="#000" stroke-width="1.04" stroke-linejoin="round" stroke-linecap="round"/><polyline points="75.0,39.7 78.9,41.1 82.9,42.1 86.7,43.7" fill="none" stroke="#000" stroke-width="0.85" stroke-linejoin="round" stroke-linecap="round"/><polyline points="86.7,43.7 90.1,45.8 92.4,49.3 95.5,51.9" fill="none" stroke="#000" stroke-width="0.85" stroke-linejoin="round" stroke-linecap="round"/><polyline points="95.5,51.9 96.5,55.8 98.5,59.2 98.9,63.2" fill="none" stroke="#000" stroke-width="0.85" stroke-linejoin="round" stroke-linecap="round"/><polyline points="75.0,39.7 78.7,37.4 82.6,35.5 86.0,32.9" fill="none" stroke="#000" stroke-width="0.85" stroke-linejoin="round" stroke-linecap="round"/><polyline points="86.0,32.9 89.3,30.5 93.2,29.4 97.0,27.7" fill="none" stroke="#000" stroke-width="0.85" stroke-linejoin="round" stroke-linecap="round"/><polyline points="61.9,40.0 65.0,36.5 67.7,32.7 70.9,29.3" fill="none" stroke="#000" stroke-width="0.85" stroke-linejoin="round" stroke-linecap="round"/><polyline points="70.9,29.3 74.1,26.5 77.6,24.1 80.5,21.0" fill="none" stroke="#000" stroke-width="0.85" stroke-linejoin="round" stroke-linecap="round"/><polyline points="80.5,21.0 83.8,21.8 87.2,21.3 90.5,21.9" fill="none" stroke="#000" stroke-width="0.85" stroke-linejoin="round" stroke-linecap="round"/><polyline points="70.9,29.3 72.8,25.2 72.8,20.6 74.0,16.2" fill="none" stroke="#000" stroke-width="0.85" stroke-linejoin="round" stroke-linecap="round"/><polyline points="50.0,51.7 54.6,52.7 58.9,54.5 63.5,53.8" fill="none" stroke="#000" stroke-width="1.30" stroke-linejoin="round" stroke-linecap="round"/><polyline points="63.5,53.8 66.1,57.1 69.5,59.7 72.5,62.8" fill="none" stroke="#000" stroke-width="0.97" stroke-linejoin="round" stroke-linecap="round"/><polyline points="72.5,62.8 73.8,66.8 74.3,71.0 75.1,75.1" fill="none" stroke="#000" stroke-width="0.85" stroke-linejoin="round" stroke-linecap="round"/><polyline points="75.1,75.1 75.3,78.7 76.2,82.2 76.1,85.8" fill="none" stroke="#000" stroke-width="0.85" stroke-linejoin="round" stroke-linecap="round"/><polyline points="76.1,85.8 73.5,88.1 72.5,91.5 71.0,94.6" fill="none" stroke="#000" stroke-width="0.85" stroke-linejoin="round" stroke-linecap="round"/><polyline points="72.5,62.8 76.3,63.4 79.5,65.5 83.3,65.9" fill="none" stroke="#000" stroke-width="0.85" stroke-linejoin="round" stroke-linecap="round"/><polyline points="63.5,53.8 68.0,52.8 72.6,53.3 76.8,51.5" fill="none" stroke="#000" stroke-width="0.85" stroke-linejoin="round" stroke-linecap="round"/><polyline points="76.8,51.5 81.2,52.2 85.6,52.4 90.1,52.8" fill="none" stroke="#000" stroke-width="0.85" stroke-linejoin="round" stroke-linecap="round"/><polyline points="48.1,52.5 43.6,51.2 39.0,51.6 34.9,49.3" fill="none" stroke="#000" stroke-width="1.30" stroke-linejoin="round" stroke-linecap="round"/><polyline points="34.9,49.3 32.3,45.5 28.4,43.1 25.2,39.8" fill="none" stroke="#000" stroke-width="0.89" stroke-linejoin="round" stroke-linecap="round"/><polyline points="25.2,39.8 23.2,36.5 21.2,33.2 19.6,29.8" fill="none" stroke="#000" stroke-width="0.85" stroke-linejoin="round" stroke-linecap="round"/><polyline points="19.6,29.8 20.2,26.8 20.4,23.8 19.6,20.9" fill="none" stroke="#000" stroke-width="0.85" stroke-linejoin="round" stroke-linecap="round"/><polyline points="19.6,20.9 20.6,18.3 22.4,16.2 23.6,13.6" fill="none" stroke="#000" stroke-width="0.85" stroke-linejoin="round" stroke-linecap="round"/><polyline points="25.2,39.8 21.2,38.4 17.6,36.3 13.4,36.2" fill="none" stroke="#000" stroke-width="0.85" stroke-linejoin="round" stroke-linecap="round"/><polyline points="34.9,49.3 30.5,49.7 26.1,50.3 21.8,51.2" fill="none" stroke="#000" stroke-width="0.85" stroke-linejoin="round" stroke-linecap="round"/><polyline points="21.8,51.2 18.2,51.1 14.5,51.3 10.9,52.0" fill="none" stroke="#000" stroke-width="0.85" stroke-linejoin="round" stroke-linecap="round"/><polyline points="47.9,49.9 45.3,53.8 41.1,55.9 38.3,59.6" fill="none" stroke="#000" stroke-width="1.20" stroke-linejoin="round" stroke-linecap="round"/><polyline points="38.3,59.6 35.0,61.6 31.1,62.2 27.4,63.1" fill="none" stroke="#000" stroke-width="0.93" stroke-linejoin="round" stroke-linecap="round"/><polyline points="27.4,63.1 24.2,62.4 20.9,62.1 17.7,61.5" fill="none" stroke="#000" stroke-width="0.85" stroke-linejoin="round" stroke-linecap="round"/><polyline points="17.7,61.5 14.7,61.1 11.7,60.5 8.7,60.3" fill="none" stroke="#000" stroke-width="0.85" stroke-linejoin="round" stroke-linecap="round"/><polyline points="8.7,60.3 6.4,58.3 3.6,57.4 1.3,55.5" fill="none" stroke="#000" stroke-width="0.85" stroke-linejoin="round" stroke-linecap="round"/><polyline points="17.7,61.5 15.8,63.1 13.5,64.3 12.0,66.2" fill="none" stroke="#000" stroke-width="0.85" stroke-linejoin="round" stroke-linecap="round"/><polyline points="27.4,63.1 25.7,66.5 23.1,69.1 20.5,71.9" fill="none" stroke="#000" stroke-width="0.85" stroke-linejoin="round" stroke-linecap="round"/><polyline points="20.5,71.9 17.5,71.6 14.7,72.7 11.7,72.3" fill="none" stroke="#000" stroke-width="0.85" stroke-linejoin="round" stroke-linecap="round"/><polyline points="38.3,59.6 35.9,63.5 34.7,68.0 34.4,72.6" fill="none" stroke="#000" stroke-width="0.85" stroke-linejoin="round" stroke-linecap="round"/><polyline points="34.4,72.6 32.9,76.0 30.3,78.7 27.6,81.2" fill="none" stroke="#000" stroke-width="0.85" stroke-linejoin="round" stroke-linecap="round"/><polyline points="47.2,48.5 46.4,43.9 45.6,39.3 44.8,34.8" fill="none" stroke="#000" stroke-width="1.20" stroke-linejoin="round" stroke-linecap="round"/><polyline points="44.8,34.8 46.2,30.7 49.3,27.6 52.5,24.6" fill="none" stroke="#000" stroke-width="0.85" stroke-linejoin="round" stroke-linecap="round"/><polyline points="52.5,24.6 55.5,22.6 59.1,21.4 62.4,19.8" fill="none" stroke="#000" stroke-width="0.85" stroke-linejoin="round" stroke-linecap="round"/><polyline points="62.4,19.8 65.4,19.2 68.1,17.8 70.7,16.2" fill="none" stroke="#000" stroke-width="0.85" stroke-linejoin="round" stroke-linecap="round"/><polyline points="70.7,16.2 73.1,17.1 75.6,17.8 78.1,18.6" fill="none" stroke="#000" stroke-width="0.85" stroke-linejoin="round" stroke-linecap="round"/><polyline points="52.5,24.6 53.1,21.1 52.8,17.5 52.7,13.9" fill="none" stroke="#000" stroke-width="0.85" stroke-linejoin="round" stroke-linecap="round"/><polyline points="44.8,34.8 44.3,30.3 42.7,26.2 42.5,21.7" fill="none" stroke="#000" stroke-width="0.85" stroke-linejoin="round" stroke-linecap="round"/><polyline points="42.5,21.7 42.2,18.0 44.3,14.9 46.2,11.7" fill="none" stroke="#000" stroke-width="0.85" stroke-linejoin="round" stroke-linecap="round"/></g><circle cx="49.4" cy="49.6" r="45.6" fill="none" stroke="#000" stroke-width="0.9"/></g></svg>
<div class="a cap" style="left:315px;top:204px">Tree without leaves (2D)</div>
<svg class="a img" style="left:515px;top:93px" width="136" height="100"><g transform="translate(40,12)"><path d="M30.9 46 V74.7 M30.9 67.5 L13 72 M30.9 63.3 L46 67.5 M30.9 57.5 L18.7 60.4 M30.9 54.6 L41.7 51.7 M30.9 46 L26 38 M30.9 46 L37 40" stroke="#2a3632" stroke-width="0.7" opacity="0.8" fill="none"/><circle cx="29.5" cy="10.8" r="1.4" fill="#16261f"/><circle cx="29.4" cy="9.7" r="1.3" fill="#16261f"/><circle cx="30.4" cy="9.5" r="1.0" fill="#16261f"/><circle cx="28.3" cy="8.8" r="1.2" fill="#16261f"/><circle cx="31.6" cy="7.0" r="0.8" fill="#16261f"/><circle cx="27.3" cy="7.4" r="1.3" fill="#16261f"/><circle cx="30.5" cy="8.8" r="1.4" fill="#16261f"/><circle cx="28.7" cy="7.7" r="1.0" fill="#16261f"/><circle cx="32.8" cy="10.0" r="0.9" fill="#16261f"/><circle cx="32.0" cy="8.1" r="1.3" fill="#16261f"/><circle cx="32.5" cy="5.7" r="0.9" fill="#16261f"/><circle cx="27.8" cy="5.8" r="1.2" fill="#16261f"/><circle cx="30.0" cy="11.7" r="1.3" fill="#16261f"/><circle cx="28.2" cy="12.8" r="1.0" fill="#16261f"/><circle cx="30.9" cy="11.7" r="1.2" fill="#16261f"/><circle cx="27.5" cy="16.3" r="1.3" fill="#16261f"/><circle cx="27.7" cy="15.0" r="1.3" fill="#16261f"/><circle cx="27.7" cy="13.2" r="0.9" fill="#16261f"/><circle cx="29.7" cy="12.7" r="1.0" fill="#16261f"/><circle cx="26.1" cy="17.1" r="1.4" fill="#16261f"/><circle cx="31.2" cy="15.1" r="1.1" fill="#16261f"/><circle cx="28.7" cy="17.2" r="1.5" fill="#16261f"/><circle cx="29.8" cy="16.1" r="1.0" fill="#16261f"/><circle cx="28.2" cy="12.3" r="1.1" fill="#16261f"/><circle cx="37.5" cy="18.5" r="1.4" fill="#16261f"/><circle cx="34.7" cy="19.9" r="1.4" fill="#16261f"/><circle cx="38.4" cy="19.1" r="1.5" fill="#16261f"/><circle cx="36.3" cy="16.5" r="1.0" fill="#16261f"/><circle cx="34.2" cy="19.6" r="1.4" fill="#16261f"/><circle cx="38.0" cy="16.2" r="1.3" fill="#16261f"/><circle cx="34.1" cy="17.3" r="1.3" fill="#16261f"/><circle cx="36.6" cy="20.9" r="0.9" fill="#16261f"/><circle cx="37.5" cy="20.0" r="1.2" fill="#16261f"/><circle cx="35.8" cy="20.9" r="1.0" fill="#16261f"/><circle cx="38.7" cy="15.8" r="1.5" fill="#16261f"/><circle cx="38.7" cy="16.4" r="1.5" fill="#16261f"/><circle cx="26.4" cy="20.9" r="1.2" fill="#16261f"/><circle cx="24.2" cy="26.3" r="1.2" fill="#16261f"/><circle cx="28.8" cy="22.0" r="1.2" fill="#16261f"/><circle cx="25.5" cy="21.1" r="1.2" fill="#16261f"/><circle cx="26.6" cy="19.8" r="1.5" fill="#16261f"/><circle cx="26.3" cy="25.7" r="1.4" fill="#16261f"/><circle cx="25.6" cy="22.3" r="1.2" fill="#16261f"/><circle cx="24.4" cy="20.2" r="1.0" fill="#16261f"/><circle cx="30.1" cy="23.6" r="1.1" fill="#16261f"/><circle cx="23.8" cy="21.6" r="1.1" fill="#16261f"/><circle cx="29.3" cy="23.0" r="1.3" fill="#16261f"/><circle cx="28.1" cy="21.1" r="1.4" fill="#16261f"/><circle cx="30.3" cy="24.1" r="1.1" fill="#16261f"/><circle cx="23.9" cy="25.4" r="0.9" fill="#16261f"/><circle cx="28.4" cy="22.9" r="1.4" fill="#16261f"/><circle cx="26.9" cy="24.1" r="0.8" fill="#16261f"/><circle cx="28.6" cy="28.6" r="1.5" fill="#16261f"/><circle cx="33.7" cy="28.0" r="1.1" fill="#16261f"/><circle cx="35.1" cy="23.7" r="1.3" fill="#16261f"/><circle cx="28.4" cy="25.9" r="1.1" fill="#16261f"/><circle cx="33.3" cy="27.2" r="1.2" fill="#16261f"/><circle cx="32.2" cy="25.8" r="0.8" fill="#16261f"/><circle cx="32.8" cy="22.0" r="1.2" fill="#16261f"/><circle cx="30.5" cy="29.7" r="0.8" fill="#16261f"/><circle cx="34.8" cy="27.3" r="1.4" fill="#16261f"/><circle cx="35.6" cy="22.7" r="0.9" fill="#16261f"/><circle cx="29.5" cy="23.4" r="1.2" fill="#16261f"/><circle cx="34.9" cy="24.0" r="1.1" fill="#16261f"/><circle cx="31.3" cy="25.1" r="1.2" fill="#16261f"/><circle cx="36.3" cy="23.7" r="1.3" fill="#16261f"/><circle cx="35.1" cy="27.1" r="1.4" fill="#16261f"/><circle cx="34.4" cy="22.6" r="1.1" fill="#16261f"/><circle cx="30.5" cy="27.5" r="0.8" fill="#16261f"/><circle cx="28.2" cy="30.2" r="1.1" fill="#16261f"/><circle cx="31.9" cy="30.6" r="1.4" fill="#16261f"/><circle cx="27.8" cy="30.4" r="0.8" fill="#16261f"/><circle cx="28.5" cy="32.4" r="1.4" fill="#16261f"/><circle cx="30.0" cy="27.5" r="0.9" fill="#16261f"/><circle cx="32.7" cy="32.6" r="1.2" fill="#16261f"/><circle cx="27.4" cy="32.8" r="1.0" fill="#16261f"/><circle cx="33.0" cy="30.7" r="1.3" fill="#16261f"/><circle cx="31.5" cy="29.6" r="0.9" fill="#16261f"/><circle cx="28.2" cy="28.6" r="1.4" fill="#16261f"/><circle cx="29.5" cy="32.6" r="1.0" fill="#16261f"/><circle cx="40.9" cy="30.2" r="1.5" fill="#16261f"/><circle cx="40.6" cy="33.1" r="1.5" fill="#16261f"/><circle cx="35.2" cy="32.6" r="1.4" fill="#16261f"/><circle cx="37.5" cy="35.2" r="1.5" fill="#16261f"/><circle cx="38.0" cy="35.2" r="0.8" fill="#16261f"/><circle cx="37.0" cy="37.0" r="1.1" fill="#16261f"/><circle cx="37.7" cy="36.6" r="1.1" fill="#16261f"/><circle cx="40.2" cy="34.3" r="0.9" fill="#16261f"/><circle cx="39.8" cy="35.4" r="1.3" fill="#16261f"/><circle cx="35.5" cy="30.3" r="1.3" fill="#16261f"/><circle cx="39.9" cy="35.0" r="1.0" fill="#16261f"/><circle cx="35.7" cy="29.1" r="1.0" fill="#16261f"/><circle cx="37.7" cy="31.2" r="0.9" fill="#16261f"/><circle cx="36.3" cy="32.7" r="1.2" fill="#16261f"/><circle cx="38.1" cy="29.3" r="1.0" fill="#16261f"/><circle cx="35.6" cy="33.8" r="1.0" fill="#16261f"/><circle cx="14.9" cy="38.6" r="1.1" fill="#16261f"/><circle cx="12.5" cy="43.5" r="1.4" fill="#16261f"/><circle cx="19.6" cy="40.8" r="0.9" fill="#16261f"/><circle cx="14.9" cy="37.4" r="1.0" fill="#16261f"/><circle cx="15.8" cy="36.8" r="1.1" fill="#16261f"/><circle cx="15.2" cy="40.1" r="0.9" fill="#16261f"/><circle cx="13.8" cy="38.2" r="1.2" fill="#16261f"/><circle cx="16.6" cy="37.8" r="0.9" fill="#16261f"/><circle cx="14.2" cy="43.8" r="1.0" fill="#16261f"/><circle cx="16.8" cy="42.7" r="1.0" fill="#16261f"/><circle cx="14.5" cy="42.8" r="1.4" fill="#16261f"/><circle cx="19.6" cy="37.3" r="1.0" fill="#16261f"/><circle cx="19.4" cy="37.9" r="1.0" fill="#16261f"/><circle cx="19.5" cy="44.0" r="1.0" fill="#16261f"/><circle cx="17.4" cy="40.2" r="1.2" fill="#16261f"/><circle cx="13.8" cy="39.3" r="1.4" fill="#16261f"/><circle cx="23.8" cy="36.5" r="1.2" fill="#16261f"/><circle cx="25.0" cy="39.1" r="1.3" fill="#16261f"/><circle cx="24.7" cy="41.5" r="1.1" fill="#16261f"/><circle cx="25.7" cy="38.4" r="1.0" fill="#16261f"/><circle cx="25.6" cy="40.7" r="1.4" fill="#16261f"/><circle cx="23.9" cy="38.8" r="1.2" fill="#16261f"/><circle cx="22.9" cy="39.8" r="1.3" fill="#16261f"/><circle cx="26.2" cy="36.3" r="1.5" fill="#16261f"/><circle cx="24.3" cy="38.2" r="1.2" fill="#16261f"/><circle cx="27.0" cy="40.0" r="1.2" fill="#16261f"/><circle cx="26.2" cy="38.0" r="1.4" fill="#16261f"/><circle cx="24.7" cy="39.6" r="0.9" fill="#16261f"/><circle cx="37.5" cy="42.6" r="1.0" fill="#16261f"/><circle cx="36.8" cy="39.0" r="1.5" fill="#16261f"/><circle cx="37.0" cy="41.1" r="1.3" fill="#16261f"/><circle cx="38.7" cy="41.3" r="0.8" fill="#16261f"/><circle cx="34.5" cy="41.7" r="1.2" fill="#16261f"/><circle cx="36.4" cy="42.1" r="1.1" fill="#16261f"/><circle cx="35.3" cy="43.3" r="1.2" fill="#16261f"/><circle cx="35.9" cy="40.8" r="0.8" fill="#16261f"/><circle cx="33.6" cy="41.2" r="1.5" fill="#16261f"/><circle cx="33.6" cy="44.3" r="0.9" fill="#16261f"/><circle cx="34.8" cy="41.4" r="0.9" fill="#16261f"/><circle cx="35.8" cy="41.5" r="1.1" fill="#16261f"/><circle cx="48.0" cy="45.6" r="1.0" fill="#16261f"/><circle cx="49.1" cy="43.6" r="1.4" fill="#16261f"/><circle cx="47.5" cy="49.2" r="0.9" fill="#16261f"/><circle cx="50.8" cy="44.9" r="0.9" fill="#16261f"/><circle cx="42.6" cy="48.0" r="1.5" fill="#16261f"/><circle cx="43.3" cy="46.5" r="0.9" fill="#16261f"/><circle cx="47.4" cy="46.8" r="0.8" fill="#16261f"/><circle cx="47.1" cy="44.4" r="1.2" fill="#16261f"/><circle cx="44.9" cy="49.5" r="0.9" fill="#16261f"/><circle cx="48.5" cy="50.5" r="0.8" fill="#16261f"/><circle cx="42.0" cy="51.2" r="0.9" fill="#16261f"/><circle cx="44.3" cy="47.0" r="1.0" fill="#16261f"/><circle cx="49.6" cy="47.7" r="1.2" fill="#16261f"/><circle cx="47.0" cy="48.5" r="1.2" fill="#16261f"/><circle cx="44.5" cy="50.9" r="1.2" fill="#16261f"/><circle cx="49.1" cy="49.5" r="1.0" fill="#16261f"/><circle cx="47.1" cy="43.3" r="0.9" fill="#16261f"/><circle cx="42.2" cy="45.5" r="0.9" fill="#16261f"/><circle cx="47.9" cy="47.5" r="1.1" fill="#16261f"/><circle cx="42.4" cy="46.3" r="0.9" fill="#16261f"/><circle cx="48.2" cy="44.3" r="1.3" fill="#16261f"/><circle cx="50.4" cy="43.5" r="1.1" fill="#16261f"/><circle cx="45.3" cy="42.0" r="1.1" fill="#16261f"/><circle cx="44.8" cy="42.3" r="0.8" fill="#16261f"/><circle cx="45.3" cy="45.0" r="1.5" fill="#16261f"/><circle cx="47.5" cy="43.1" r="1.3" fill="#16261f"/><circle cx="46.9" cy="45.2" r="1.1" fill="#16261f"/><circle cx="44.9" cy="40.3" r="1.3" fill="#16261f"/><circle cx="46.2" cy="41.8" r="1.2" fill="#16261f"/><circle cx="45.4" cy="42.9" r="1.3" fill="#16261f"/><circle cx="49.0" cy="43.4" r="0.9" fill="#16261f"/><circle cx="45.1" cy="44.8" r="1.4" fill="#16261f"/><circle cx="20.2" cy="55.0" r="0.8" fill="#16261f"/><circle cx="23.8" cy="52.2" r="1.5" fill="#16261f"/><circle cx="17.6" cy="55.0" r="1.3" fill="#16261f"/><circle cx="19.5" cy="56.7" r="1.1" fill="#16261f"/><circle cx="20.0" cy="54.9" r="1.1" fill="#16261f"/><circle cx="26.5" cy="54.5" r="1.0" fill="#16261f"/><circle cx="24.7" cy="52.6" r="1.0" fill="#16261f"/><circle cx="23.7" cy="53.1" r="0.9" fill="#16261f"/><circle cx="18.0" cy="48.8" r="0.9" fill="#16261f"/><circle cx="17.2" cy="50.3" r="1.0" fill="#16261f"/><circle cx="21.9" cy="50.0" r="1.3" fill="#16261f"/><circle cx="19.5" cy="49.4" r="1.4" fill="#16261f"/><circle cx="26.4" cy="53.5" r="0.9" fill="#16261f"/><circle cx="26.2" cy="54.6" r="1.4" fill="#16261f"/><circle cx="26.5" cy="55.4" r="0.9" fill="#16261f"/><circle cx="25.2" cy="49.2" r="1.3" fill="#16261f"/><circle cx="24.8" cy="54.4" r="1.3" fill="#16261f"/><circle cx="21.5" cy="52.5" r="1.0" fill="#16261f"/><circle cx="20.7" cy="51.3" r="1.2" fill="#16261f"/><circle cx="25.4" cy="47.7" r="1.2" fill="#16261f"/><circle cx="27.0" cy="53.8" r="1.1" fill="#16261f"/><circle cx="32.4" cy="48.9" r="0.8" fill="#16261f"/><circle cx="30.9" cy="52.2" r="1.3" fill="#16261f"/><circle cx="28.4" cy="51.6" r="1.1" fill="#16261f"/><circle cx="25.3" cy="50.6" r="1.0" fill="#16261f"/><circle cx="28.2" cy="48.0" r="1.0" fill="#16261f"/><circle cx="31.4" cy="49.0" r="1.2" fill="#16261f"/><circle cx="29.3" cy="50.2" r="1.0" fill="#16261f"/><circle cx="30.2" cy="46.7" r="0.9" fill="#16261f"/><circle cx="31.0" cy="50.0" r="0.9" fill="#16261f"/><circle cx="31.6" cy="49.8" r="0.8" fill="#16261f"/><circle cx="32.4" cy="47.9" r="1.3" fill="#16261f"/><circle cx="25.8" cy="51.5" r="0.9" fill="#16261f"/><circle cx="32.2" cy="48.5" r="1.3" fill="#16261f"/><circle cx="26.8" cy="49.3" r="1.4" fill="#16261f"/><circle cx="26.1" cy="49.5" r="1.0" fill="#16261f"/><circle cx="12.7" cy="54.5" r="1.3" fill="#16261f"/><circle cx="12.7" cy="53.1" r="1.1" fill="#16261f"/><circle cx="9.3" cy="54.4" r="1.3" fill="#16261f"/><circle cx="8.6" cy="57.2" r="1.4" fill="#16261f"/><circle cx="14.4" cy="55.6" r="0.9" fill="#16261f"/><circle cx="8.9" cy="55.4" r="1.3" fill="#16261f"/><circle cx="9.1" cy="54.9" r="1.4" fill="#16261f"/><circle cx="9.3" cy="57.7" r="1.3" fill="#16261f"/><circle cx="9.3" cy="59.0" r="0.9" fill="#16261f"/><circle cx="11.7" cy="53.1" r="1.3" fill="#16261f"/><circle cx="11.1" cy="57.4" r="1.2" fill="#16261f"/><circle cx="9.4" cy="55.5" r="1.3" fill="#16261f"/><circle cx="40.2" cy="55.8" r="0.9" fill="#16261f"/><circle cx="39.8" cy="57.9" r="1.1" fill="#16261f"/><circle cx="40.7" cy="56.8" r="0.9" fill="#16261f"/><circle cx="37.9" cy="55.8" r="1.2" fill="#16261f"/><circle cx="39.2" cy="57.9" r="1.3" fill="#16261f"/><circle cx="39.6" cy="58.9" r="1.3" fill="#16261f"/><circle cx="38.0" cy="57.6" r="1.2" fill="#16261f"/><circle cx="39.8" cy="56.7" r="0.8" fill="#16261f"/><circle cx="51.3" cy="66.0" r="1.1" fill="#16261f"/><circle cx="46.5" cy="63.2" r="1.2" fill="#16261f"/><circle cx="49.0" cy="66.1" r="1.5" fill="#16261f"/><circle cx="51.5" cy="61.0" r="1.4" fill="#16261f"/><circle cx="49.3" cy="62.4" r="1.3" fill="#16261f"/><circle cx="50.4" cy="66.0" r="1.3" fill="#16261f"/><circle cx="46.0" cy="60.7" r="1.0" fill="#16261f"/><circle cx="46.1" cy="60.6" r="1.4" fill="#16261f"/><circle cx="48.9" cy="64.0" r="1.2" fill="#16261f"/><circle cx="48.4" cy="64.5" r="0.9" fill="#16261f"/><circle cx="49.1" cy="63.9" r="1.0" fill="#16261f"/><circle cx="47.7" cy="63.3" r="0.9" fill="#16261f"/><circle cx="60.1" cy="63.5" r="1.1" fill="#16261f"/><circle cx="59.0" cy="65.3" r="1.3" fill="#16261f"/><circle cx="55.6" cy="64.4" r="1.3" fill="#16261f"/><circle cx="60.3" cy="60.6" r="0.9" fill="#16261f"/><circle cx="57.8" cy="63.0" r="1.2" fill="#16261f"/><circle cx="57.1" cy="64.7" r="1.3" fill="#16261f"/><circle cx="55.9" cy="64.5" r="1.3" fill="#16261f"/><circle cx="56.2" cy="66.0" r="1.2" fill="#16261f"/><circle cx="59.9" cy="64.6" r="0.9" fill="#16261f"/><circle cx="56.0" cy="64.9" r="1.0" fill="#16261f"/><circle cx="60.5" cy="64.9" r="0.8" fill="#16261f"/><circle cx="60.1" cy="61.9" r="0.8" fill="#16261f"/><circle cx="18.5" cy="65.1" r="0.9" fill="#16261f"/><circle cx="17.0" cy="63.8" r="1.1" fill="#16261f"/><circle cx="17.7" cy="63.9" r="1.0" fill="#16261f"/><circle cx="14.9" cy="65.1" r="1.3" fill="#16261f"/><circle cx="15.6" cy="64.7" r="0.8" fill="#16261f"/><circle cx="19.4" cy="63.2" r="1.1" fill="#16261f"/><circle cx="16.5" cy="62.6" r="1.5" fill="#16261f"/><circle cx="19.4" cy="65.0" r="1.4" fill="#16261f"/><circle cx="18.7" cy="64.2" r="1.0" fill="#16261f"/><circle cx="16.7" cy="66.0" r="1.0" fill="#16261f"/><circle cx="14.7" cy="63.9" r="1.2" fill="#16261f"/><circle cx="19.7" cy="62.8" r="1.4" fill="#16261f"/><circle cx="25.9" cy="70.3" r="0.8" fill="#16261f"/><circle cx="22.8" cy="66.3" r="1.4" fill="#16261f"/><circle cx="22.0" cy="67.9" r="0.8" fill="#16261f"/><circle cx="21.2" cy="67.9" r="1.0" fill="#16261f"/><circle cx="23.7" cy="67.3" r="1.2" fill="#16261f"/><circle cx="23.0" cy="69.2" r="0.9" fill="#16261f"/><circle cx="25.4" cy="69.1" r="1.0" fill="#16261f"/><circle cx="20.0" cy="67.0" r="1.0" fill="#16261f"/><circle cx="22.1" cy="69.6" r="1.4" fill="#16261f"/><circle cx="25.7" cy="64.6" r="1.3" fill="#16261f"/><circle cx="25.1" cy="68.9" r="0.9" fill="#16261f"/><circle cx="23.2" cy="66.0" r="1.1" fill="#16261f"/><circle cx="43.4" cy="72.0" r="1.3" fill="#16261f"/><circle cx="43.6" cy="71.5" r="1.4" fill="#16261f"/><circle cx="46.1" cy="70.2" r="1.1" fill="#16261f"/><circle cx="48.8" cy="66.5" r="0.9" fill="#16261f"/><circle cx="43.8" cy="70.9" r="0.9" fill="#16261f"/><circle cx="46.4" cy="68.6" r="1.5" fill="#16261f"/><circle cx="44.4" cy="67.6" r="1.0" fill="#16261f"/><circle cx="47.8" cy="70.2" r="1.3" fill="#16261f"/><circle cx="44.9" cy="67.6" r="0.9" fill="#16261f"/><circle cx="44.2" cy="70.7" r="1.2" fill="#16261f"/><circle cx="43.9" cy="67.0" r="1.1" fill="#16261f"/><circle cx="45.4" cy="69.2" r="1.5" fill="#16261f"/><circle cx="12.6" cy="70.7" r="1.0" fill="#16261f"/><circle cx="12.1" cy="69.8" r="1.3" fill="#16261f"/><circle cx="16.3" cy="73.1" r="0.8" fill="#16261f"/><circle cx="16.4" cy="70.8" r="0.9" fill="#16261f"/><circle cx="12.9" cy="71.0" r="1.2" fill="#16261f"/><circle cx="15.4" cy="70.4" r="1.5" fill="#16261f"/><circle cx="11.6" cy="71.3" r="1.1" fill="#16261f"/><circle cx="15.9" cy="70.4" r="1.1" fill="#16261f"/><circle cx="16.2" cy="69.7" r="0.8" fill="#16261f"/><circle cx="16.4" cy="74.8" r="0.9" fill="#16261f"/><circle cx="16.3" cy="71.1" r="1.2" fill="#16261f"/><circle cx="15.2" cy="72.4" r="1.0" fill="#16261f"/><circle cx="34.9" cy="33.1" r="0.8" fill="#16261f"/><circle cx="35.5" cy="35.6" r="0.9" fill="#16261f"/><circle cx="35.5" cy="37.9" r="1.0" fill="#16261f"/><circle cx="30.3" cy="35.7" r="0.9" fill="#16261f"/><circle cx="33.5" cy="37.9" r="1.1" fill="#16261f"/><circle cx="30.2" cy="37.0" r="0.9" fill="#16261f"/><circle cx="31.3" cy="34.1" r="1.0" fill="#16261f"/><circle cx="35.4" cy="33.1" r="1.2" fill="#16261f"/><circle cx="31.5" cy="34.7" r="1.1" fill="#16261f"/><circle cx="33.4" cy="33.3" r="1.0" fill="#16261f"/><circle cx="30.9" cy="34.1" r="1.4" fill="#16261f"/><circle cx="33.2" cy="36.7" r="1.4" fill="#16261f"/><circle cx="41.4" cy="52.3" r="1.3" fill="#16261f"/><circle cx="39.7" cy="50.5" r="1.1" fill="#16261f"/><circle cx="41.9" cy="50.3" r="1.1" fill="#16261f"/><circle cx="39.0" cy="49.6" r="1.0" fill="#16261f"/><circle cx="41.8" cy="51.4" r="0.8" fill="#16261f"/><circle cx="42.2" cy="50.4" r="1.3" fill="#16261f"/><circle cx="42.2" cy="52.2" r="0.9" fill="#16261f"/><circle cx="40.9" cy="49.4" r="1.4" fill="#16261f"/><circle cx="59.2" cy="65.8" r="1.5" fill="#16261f"/><circle cx="56.4" cy="68.9" r="1.4" fill="#16261f"/><circle cx="56.9" cy="68.9" r="1.4" fill="#16261f"/><circle cx="56.2" cy="67.9" r="1.4" fill="#16261f"/><circle cx="58.3" cy="69.2" r="0.8" fill="#16261f"/><circle cx="58.3" cy="69.3" r="1.2" fill="#16261f"/><circle cx="57.7" cy="66.3" r="1.5" fill="#16261f"/><circle cx="59.0" cy="67.5" r="1.0" fill="#16261f"/></g></svg>
<div class="a cap" style="left:494px;top:204px">9620, Tree type 1</div>
<svg class="a img" style="left:694px;top:93px" width="136" height="100"><g transform="translate(36,5)"><path d="M34 44 V84.5" stroke="#8a8a8a" stroke-width="1.5"/><circle cx="30.8" cy="42.5" r="1.6" fill="#0b4a18"/><circle cx="30.8" cy="62.3" r="1.0" fill="#136226"/><circle cx="31.9" cy="46.1" r="1.0" fill="#0b4a18"/><circle cx="47.2" cy="51.5" r="0.8" fill="#0b4a18"/><circle cx="38.3" cy="15.6" r="0.8" fill="#136226"/><circle cx="45.8" cy="26.9" r="1.3" fill="#0e5a1e"/><circle cx="33.9" cy="47.9" r="1.2" fill="#07300e"/><circle cx="13.9" cy="48.9" r="1.2" fill="#136226"/><circle cx="42.6" cy="26.1" r="1.0" fill="#0a3a12"/><circle cx="42.6" cy="33.1" r="1.3" fill="#0e5a1e"/><circle cx="45.8" cy="23.1" r="0.9" fill="#0a3a12"/><circle cx="31.4" cy="37.6" r="1.4" fill="#0e5a1e"/><circle cx="30.6" cy="17.8" r="1.5" fill="#0e5a1e"/><circle cx="29.3" cy="30.7" r="1.2" fill="#0e5a1e"/><circle cx="37.7" cy="43.7" r="0.8" fill="#0e5a1e"/><circle cx="19.8" cy="22.3" r="1.5" fill="#0a3a12"/><circle cx="48.2" cy="30.9" r="0.9" fill="#0e5a1e"/><circle cx="36.8" cy="21.3" r="1.3" fill="#0a3a12"/><circle cx="38.6" cy="13.5" r="1.3" fill="#136226"/><circle cx="38.9" cy="25.8" r="1.0" fill="#136226"/><circle cx="21.5" cy="17.7" r="1.5" fill="#136226"/><circle cx="29.4" cy="12.0" r="0.8" fill="#0a3a12"/><circle cx="21.0" cy="52.2" r="1.0" fill="#136226"/><circle cx="32.6" cy="39.8" r="1.6" fill="#0b4416"/><circle cx="15.8" cy="37.1" r="1.4" fill="#136226"/><circle cx="38.3" cy="23.8" r="1.6" fill="#0e5a1e"/><circle cx="28.9" cy="21.7" r="0.8" fill="#0a3a12"/><circle cx="27.0" cy="43.3" r="0.9" fill="#0a3a12"/><circle cx="16.4" cy="35.2" r="1.1" fill="#07300e"/><circle cx="41.8" cy="44.2" r="0.9" fill="#0b4416"/><circle cx="26.4" cy="25.9" r="0.8" fill="#136226"/><circle cx="39.3" cy="37.3" r="1.5" fill="#0a3a12"/><circle cx="30.8" cy="29.6" r="0.8" fill="#07300e"/><circle cx="43.9" cy="13.7" r="1.7" fill="#0a3a12"/><circle cx="26.2" cy="50.9" r="1.6" fill="#0b4a18"/><circle cx="40.5" cy="30.4" r="0.8" fill="#0b4416"/><circle cx="13.7" cy="47.8" r="1.7" fill="#0b4a18"/><circle cx="43.5" cy="31.0" r="1.5" fill="#136226"/><circle cx="31.1" cy="36.0" r="1.3" fill="#136226"/><circle cx="37.7" cy="37.2" r="1.0" fill="#07300e"/><circle cx="40.4" cy="37.6" r="1.6" fill="#0a3a12"/><circle cx="23.8" cy="50.4" r="1.0" fill="#0e5a1e"/><circle cx="44.7" cy="27.9" r="1.6" fill="#0b4a18"/><circle cx="40.6" cy="18.3" r="1.2" fill="#0e5a1e"/><circle cx="50.5" cy="30.8" r="1.3" fill="#0a3a12"/><circle cx="26.1" cy="65.0" r="0.8" fill="#0b4416"/><circle cx="17.8" cy="35.2" r="1.0" fill="#0e5a1e"/><circle cx="48.2" cy="30.6" r="1.3" fill="#07300e"/><circle cx="24.5" cy="61.2" r="1.7" fill="#0b4a18"/><circle cx="24.7" cy="60.5" r="1.1" fill="#136226"/><circle cx="36.2" cy="25.7" r="1.5" fill="#0b4416"/><circle cx="39.5" cy="32.1" r="1.0" fill="#0a3a12"/><circle cx="30.5" cy="47.2" r="1.4" fill="#0a3a12"/><circle cx="19.2" cy="36.8" r="1.0" fill="#0b4416"/><circle cx="44.7" cy="40.8" r="0.8" fill="#0e5a1e"/><circle cx="22.5" cy="28.2" r="1.4" fill="#136226"/><circle cx="42.2" cy="20.0" r="1.2" fill="#07300e"/><circle cx="27.8" cy="35.2" r="1.0" fill="#0b4416"/><circle cx="27.3" cy="43.1" r="1.6" fill="#0a3a12"/><circle cx="31.3" cy="48.6" r="1.0" fill="#07300e"/><circle cx="21.1" cy="31.1" r="0.9" fill="#0a3a12"/><circle cx="34.7" cy="58.0" r="1.1" fill="#07300e"/><circle cx="49.4" cy="28.3" r="0.9" fill="#0b4a18"/><circle cx="25.7" cy="33.2" r="1.0" fill="#0b4416"/><circle cx="34.5" cy="51.0" r="1.6" fill="#0b4a18"/><circle cx="16.8" cy="39.6" r="1.5" fill="#07300e"/><circle cx="34.2" cy="24.4" r="1.5" fill="#07300e"/><circle cx="17.6" cy="39.5" r="1.6" fill="#0a3a12"/><circle cx="24.3" cy="30.5" r="1.6" fill="#136226"/><circle cx="36.4" cy="18.5" r="1.3" fill="#136226"/><circle cx="34.8" cy="7.9" r="1.6" fill="#136226"/><circle cx="46.8" cy="42.7" r="1.2" fill="#07300e"/><circle cx="31.1" cy="66.7" r="1.5" fill="#0b4a18"/><circle cx="22.4" cy="36.7" r="0.9" fill="#0b4a18"/><circle cx="43.3" cy="21.4" r="1.2" fill="#0b4a18"/><circle cx="43.6" cy="13.2" r="1.3" fill="#0a3a12"/><circle cx="43.0" cy="52.0" r="1.6" fill="#0b4416"/><circle cx="27.3" cy="32.7" r="1.3" fill="#0e5a1e"/><circle cx="34.8" cy="62.9" r="1.3" fill="#0e5a1e"/><circle cx="34.4" cy="62.0" r="1.4" fill="#0e5a1e"/><circle cx="20.7" cy="54.6" r="1.5" fill="#0e5a1e"/><circle cx="24.5" cy="26.1" r="1.6" fill="#0e5a1e"/><circle cx="45.8" cy="18.0" r="0.9" fill="#0e5a1e"/><circle cx="27.8" cy="34.1" r="1.6" fill="#136226"/><circle cx="28.5" cy="50.9" r="0.8" fill="#0e5a1e"/><circle cx="36.2" cy="29.0" r="1.5" fill="#0a3a12"/><circle cx="15.3" cy="38.9" r="1.5" fill="#136226"/><circle cx="46.9" cy="37.3" r="0.8" fill="#136226"/><circle cx="38.2" cy="65.6" r="1.2" fill="#0e5a1e"/><circle cx="18.5" cy="18.7" r="1.6" fill="#0a3a12"/><circle cx="31.3" cy="56.2" r="1.1" fill="#0b4a18"/><circle cx="29.6" cy="28.8" r="1.0" fill="#0a3a12"/><circle cx="30.9" cy="54.5" r="1.2" fill="#0e5a1e"/><circle cx="37.8" cy="11.4" r="1.5" fill="#0a3a12"/><circle cx="42.4" cy="62.7" r="1.4" fill="#0b4a18"/><circle cx="36.2" cy="17.8" r="1.3" fill="#0a3a12"/><circle cx="47.0" cy="22.3" r="1.6" fill="#07300e"/><circle cx="44.2" cy="15.7" r="1.6" fill="#0e5a1e"/><circle cx="42.0" cy="56.4" r="1.5" fill="#0b4a18"/><circle cx="19.5" cy="17.4" r="1.5" fill="#0a3a12"/><circle cx="26.4" cy="47.8" r="1.4" fill="#0e5a1e"/><circle cx="23.7" cy="19.5" r="1.2" fill="#0e5a1e"/><circle cx="34.5" cy="31.1" r="1.7" fill="#07300e"/><circle cx="28.2" cy="43.5" r="0.9" fill="#0b4416"/><circle cx="44.0" cy="22.2" r="1.2" fill="#0b4416"/><circle cx="45.0" cy="48.4" r="0.8" fill="#0a3a12"/><circle cx="35.3" cy="39.0" r="1.7" fill="#136226"/><circle cx="30.4" cy="48.2" r="1.3" fill="#07300e"/><circle cx="31.7" cy="16.3" r="1.2" fill="#136226"/><circle cx="37.4" cy="33.8" r="1.2" fill="#0a3a12"/><circle cx="34.2" cy="45.1" r="1.1" fill="#0a3a12"/><circle cx="32.2" cy="23.1" r="1.6" fill="#07300e"/><circle cx="43.0" cy="24.8" r="0.8" fill="#0e5a1e"/><circle cx="36.9" cy="47.4" r="1.2" fill="#07300e"/><circle cx="27.9" cy="65.1" r="1.5" fill="#0b4416"/><circle cx="36.8" cy="53.4" r="1.1" fill="#0e5a1e"/><circle cx="29.8" cy="37.0" r="1.7" fill="#0e5a1e"/><circle cx="21.3" cy="52.3" r="0.8" fill="#0b4a18"/><circle cx="31.0" cy="18.6" r="0.8" fill="#136226"/><circle cx="17.1" cy="29.3" r="0.9" fill="#0b4a18"/><circle cx="31.0" cy="22.6" r="1.3" fill="#0b4a18"/><circle cx="26.7" cy="54.8" r="1.5" fill="#0e5a1e"/><circle cx="38.7" cy="29.1" r="1.0" fill="#07300e"/><circle cx="43.4" cy="51.8" r="1.0" fill="#0a3a12"/><circle cx="44.7" cy="17.7" r="1.0" fill="#07300e"/><circle cx="22.5" cy="33.5" r="1.4" fill="#0b4416"/><circle cx="20.2" cy="23.6" r="1.5" fill="#07300e"/><circle cx="26.3" cy="27.7" r="1.2" fill="#0e5a1e"/><circle cx="38.7" cy="56.5" r="1.0" fill="#0b4a18"/><circle cx="44.4" cy="31.1" r="0.9" fill="#0e5a1e"/><circle cx="25.0" cy="41.8" r="1.5" fill="#0e5a1e"/><circle cx="29.7" cy="29.7" r="0.9" fill="#0a3a12"/><circle cx="36.0" cy="37.5" r="1.4" fill="#0a3a12"/><circle cx="24.3" cy="66.0" r="1.3" fill="#07300e"/><circle cx="24.0" cy="53.6" r="1.4" fill="#0a3a12"/><circle cx="40.2" cy="26.9" r="1.6" fill="#0a3a12"/><circle cx="42.6" cy="43.1" r="1.6" fill="#07300e"/><circle cx="52.0" cy="34.3" r="1.5" fill="#0a3a12"/><circle cx="31.1" cy="19.8" r="1.7" fill="#07300e"/><circle cx="26.6" cy="29.5" r="1.1" fill="#0b4a18"/><circle cx="36.9" cy="58.3" r="1.5" fill="#0a3a12"/><circle cx="46.7" cy="41.2" r="1.6" fill="#136226"/><circle cx="30.9" cy="62.3" r="1.5" fill="#0e5a1e"/><circle cx="33.7" cy="41.5" r="1.3" fill="#0b4416"/><circle cx="40.0" cy="58.9" r="0.9" fill="#136226"/><circle cx="24.1" cy="41.5" r="1.1" fill="#0a3a12"/><circle cx="13.9" cy="47.5" r="0.9" fill="#07300e"/><circle cx="47.5" cy="33.3" r="1.4" fill="#0b4a18"/><circle cx="45.2" cy="39.9" r="1.5" fill="#0b4a18"/><circle cx="26.1" cy="59.1" r="1.1" fill="#0e5a1e"/><circle cx="32.7" cy="41.0" r="1.4" fill="#07300e"/><circle cx="31.4" cy="41.3" r="0.8" fill="#0a3a12"/><circle cx="42.7" cy="58.8" r="1.2" fill="#0b4a18"/><circle cx="17.5" cy="47.6" r="1.4" fill="#0a3a12"/><circle cx="19.4" cy="33.5" r="1.1" fill="#0b4416"/><circle cx="31.7" cy="54.0" r="1.1" fill="#0e5a1e"/><circle cx="45.7" cy="17.0" r="0.9" fill="#0b4a18"/><circle cx="46.8" cy="25.9" r="1.0" fill="#0a3a12"/><circle cx="20.0" cy="20.8" r="1.4" fill="#136226"/><circle cx="33.4" cy="34.6" r="1.6" fill="#0b4a18"/><circle cx="17.9" cy="55.8" r="1.1" fill="#136226"/><circle cx="49.3" cy="37.5" r="1.2" fill="#0a3a12"/><circle cx="40.4" cy="56.7" r="0.9" fill="#0e5a1e"/><circle cx="28.4" cy="19.6" r="0.9" fill="#0b4a18"/><circle cx="45.6" cy="57.8" r="0.9" fill="#0e5a1e"/><circle cx="51.6" cy="35.2" r="1.0" fill="#0b4a18"/><circle cx="37.9" cy="15.5" r="0.9" fill="#0a3a12"/><circle cx="44.1" cy="46.5" r="1.3" fill="#0b4416"/><circle cx="16.9" cy="56.6" r="0.8" fill="#0e5a1e"/><circle cx="22.4" cy="53.0" r="0.9" fill="#0b4a18"/><circle cx="41.9" cy="10.6" r="1.5" fill="#136226"/><circle cx="49.4" cy="25.3" r="1.5" fill="#0b4a18"/><circle cx="18.9" cy="50.7" r="1.5" fill="#0b4a18"/><circle cx="19.6" cy="41.4" r="1.3" fill="#0e5a1e"/><circle cx="24.5" cy="32.2" r="1.3" fill="#0b4a18"/><circle cx="40.7" cy="9.5" r="0.9" fill="#0e5a1e"/><circle cx="48.2" cy="48.8" r="0.8" fill="#0b4a18"/><circle cx="42.7" cy="36.8" r="1.1" fill="#0b4416"/><circle cx="19.5" cy="46.3" r="1.1" fill="#0b4a18"/><circle cx="35.6" cy="10.8" r="1.0" fill="#0b4a18"/><circle cx="43.6" cy="27.1" r="1.7" fill="#136226"/><circle cx="31.6" cy="47.9" r="1.2" fill="#0b4a18"/><circle cx="14.3" cy="50.4" r="1.4" fill="#0e5a1e"/><circle cx="31.3" cy="52.2" r="0.9" fill="#0b4416"/><circle cx="52.3" cy="33.6" r="1.3" fill="#07300e"/><circle cx="41.8" cy="37.3" r="1.6" fill="#136226"/><circle cx="46.3" cy="49.2" r="1.3" fill="#0b4416"/><circle cx="22.0" cy="17.6" r="1.1" fill="#0b4a18"/><circle cx="33.4" cy="57.8" r="1.5" fill="#136226"/><circle cx="42.8" cy="22.0" r="1.3" fill="#0a3a12"/><circle cx="35.2" cy="28.6" r="1.3" fill="#0e5a1e"/><circle cx="36.4" cy="18.3" r="1.6" fill="#07300e"/><circle cx="40.3" cy="57.0" r="0.9" fill="#0b4a18"/><circle cx="36.5" cy="51.7" r="1.1" fill="#0a3a12"/><circle cx="22.2" cy="64.2" r="1.2" fill="#07300e"/><circle cx="35.0" cy="42.6" r="1.3" fill="#0a3a12"/><circle cx="17.8" cy="55.0" r="1.6" fill="#0a3a12"/><circle cx="37.7" cy="13.2" r="1.5" fill="#0a3a12"/><circle cx="41.5" cy="29.4" r="1.5" fill="#0a3a12"/><circle cx="35.2" cy="10.1" r="0.8" fill="#0e5a1e"/><circle cx="44.8" cy="61.8" r="1.6" fill="#136226"/><circle cx="37.2" cy="58.9" r="0.8" fill="#0e5a1e"/><circle cx="34.3" cy="12.9" r="1.2" fill="#0a3a12"/><circle cx="33.9" cy="22.7" r="1.3" fill="#0a3a12"/><circle cx="43.2" cy="57.8" r="1.2" fill="#0b4a18"/><circle cx="37.6" cy="36.5" r="1.2" fill="#136226"/><circle cx="28.7" cy="23.9" r="1.6" fill="#0b4a18"/><circle cx="28.8" cy="34.1" r="1.3" fill="#136226"/><circle cx="25.2" cy="39.9" r="1.2" fill="#0b4416"/><circle cx="43.7" cy="45.0" r="1.5" fill="#0a3a12"/><circle cx="21.2" cy="61.6" r="1.0" fill="#0b4a18"/><circle cx="35.1" cy="49.0" r="1.6" fill="#0b4416"/><circle cx="50.1" cy="29.7" r="1.3" fill="#136226"/><circle cx="47.0" cy="19.9" r="1.5" fill="#136226"/><circle cx="33.9" cy="13.7" r="1.6" fill="#136226"/><circle cx="21.2" cy="25.1" r="1.1" fill="#0b4416"/><circle cx="30.3" cy="35.2" r="1.3" fill="#0e5a1e"/><circle cx="26.4" cy="44.2" r="0.8" fill="#0b4416"/><circle cx="30.9" cy="26.0" r="1.1" fill="#0e5a1e"/><circle cx="31.7" cy="18.8" r="1.1" fill="#07300e"/><circle cx="48.5" cy="28.7" r="1.2" fill="#0e5a1e"/><circle cx="39.2" cy="51.8" r="1.3" fill="#136226"/><circle cx="39.1" cy="17.8" r="1.6" fill="#0b4416"/><circle cx="39.9" cy="25.5" r="1.5" fill="#0a3a12"/><circle cx="50.0" cy="52.8" r="0.9" fill="#07300e"/><circle cx="29.1" cy="16.3" r="1.6" fill="#0b4416"/><circle cx="42.7" cy="18.2" r="1.0" fill="#0e5a1e"/><circle cx="33.1" cy="24.8" r="1.0" fill="#07300e"/><circle cx="34.1" cy="12.8" r="1.3" fill="#0a3a12"/><circle cx="40.7" cy="36.0" r="0.9" fill="#136226"/><circle cx="34.7" cy="33.4" r="1.3" fill="#0e5a1e"/><circle cx="23.1" cy="55.6" r="1.0" fill="#0a3a12"/><circle cx="24.8" cy="37.4" r="0.8" fill="#0a3a12"/><circle cx="33.3" cy="61.6" r="1.4" fill="#136226"/><circle cx="44.2" cy="40.6" r="1.3" fill="#0e5a1e"/><circle cx="15.2" cy="34.2" r="1.4" fill="#136226"/><circle cx="45.6" cy="57.7" r="1.5" fill="#0e5a1e"/><circle cx="21.9" cy="41.5" r="1.6" fill="#136226"/><circle cx="33.0" cy="7.4" r="1.3" fill="#07300e"/><circle cx="50.5" cy="26.8" r="1.3" fill="#136226"/><circle cx="32.8" cy="34.1" r="1.2" fill="#0a3a12"/><circle cx="39.4" cy="43.8" r="1.4" fill="#136226"/><circle cx="38.6" cy="40.2" r="1.0" fill="#136226"/><circle cx="32.9" cy="48.6" r="1.3" fill="#0b4a18"/><circle cx="21.7" cy="15.7" r="1.4" fill="#136226"/><circle cx="28.9" cy="29.4" r="1.0" fill="#0b4416"/><circle cx="15.9" cy="55.6" r="1.3" fill="#0e5a1e"/><circle cx="16.7" cy="35.5" r="1.5" fill="#0b4416"/><circle cx="34.2" cy="11.1" r="1.3" fill="#0b4a18"/><circle cx="29.5" cy="10.1" r="0.8" fill="#07300e"/><circle cx="45.1" cy="54.2" r="1.0" fill="#0a3a12"/><circle cx="29.2" cy="10.8" r="1.0" fill="#0a3a12"/><circle cx="28.5" cy="48.5" r="0.9" fill="#0a3a12"/><circle cx="36.1" cy="66.1" r="1.6" fill="#0e5a1e"/><circle cx="31.3" cy="31.3" r="1.6" fill="#0b4a18"/><circle cx="29.2" cy="21.5" r="1.5" fill="#0e5a1e"/><circle cx="32.1" cy="31.8" r="1.3" fill="#0a3a12"/><circle cx="31.7" cy="37.8" r="1.4" fill="#0e5a1e"/><circle cx="41.8" cy="29.3" r="1.0" fill="#0b4416"/><circle cx="33.9" cy="54.7" r="1.3" fill="#136226"/><circle cx="22.4" cy="29.2" r="0.9" fill="#0a3a12"/><circle cx="30.7" cy="62.3" r="1.1" fill="#0a3a12"/><circle cx="45.5" cy="39.8" r="0.8" fill="#0b4a18"/><circle cx="38.0" cy="37.7" r="1.0" fill="#136226"/><circle cx="24.4" cy="33.4" r="1.3" fill="#0e5a1e"/><circle cx="33.8" cy="41.7" r="1.1" fill="#0b4a18"/><circle cx="40.6" cy="14.9" r="1.0" fill="#0a3a12"/><circle cx="34.6" cy="35.1" r="0.9" fill="#136226"/><circle cx="23.4" cy="28.1" r="1.0" fill="#0b4416"/><circle cx="49.0" cy="55.1" r="1.2" fill="#0b4416"/><circle cx="23.7" cy="49.9" r="1.6" fill="#0e5a1e"/><circle cx="35.7" cy="28.7" r="0.9" fill="#0a3a12"/><circle cx="20.8" cy="47.4" r="0.9" fill="#0b4a18"/><circle cx="15.5" cy="38.0" r="1.2" fill="#0a3a12"/><circle cx="23.1" cy="52.1" r="1.0" fill="#0b4a18"/><circle cx="19.3" cy="56.5" r="1.1" fill="#07300e"/><circle cx="25.7" cy="33.3" r="0.9" fill="#136226"/><circle cx="21.8" cy="62.1" r="1.1" fill="#0b4416"/><circle cx="22.5" cy="30.3" r="1.6" fill="#0a3a12"/><circle cx="31.6" cy="26.8" r="1.0" fill="#0b4416"/><circle cx="27.2" cy="24.9" r="1.5" fill="#0e5a1e"/><circle cx="39.5" cy="30.8" r="1.1" fill="#0a3a12"/><circle cx="38.2" cy="9.3" r="0.9" fill="#0b4a18"/><circle cx="50.5" cy="30.6" r="1.6" fill="#0b4416"/><circle cx="47.0" cy="50.8" r="1.0" fill="#0b4a18"/><circle cx="16.9" cy="17.9" r="1.0" fill="#07300e"/><circle cx="20.1" cy="39.9" r="1.6" fill="#0b4a18"/><circle cx="46.6" cy="22.7" r="0.9" fill="#0b4416"/><circle cx="24.4" cy="53.0" r="1.4" fill="#07300e"/><circle cx="17.2" cy="17.9" r="0.9" fill="#0a3a12"/><circle cx="38.6" cy="37.9" r="1.3" fill="#0a3a12"/><circle cx="29.1" cy="29.6" r="1.4" fill="#0b4a18"/><circle cx="20.9" cy="21.7" r="1.1" fill="#0e5a1e"/><circle cx="24.3" cy="61.9" r="1.3" fill="#07300e"/><circle cx="32.1" cy="15.9" r="1.6" fill="#0b4a18"/><circle cx="33.3" cy="58.4" r="1.2" fill="#07300e"/><circle cx="39.2" cy="29.6" r="1.4" fill="#0e5a1e"/><circle cx="25.4" cy="55.9" r="1.6" fill="#0e5a1e"/><circle cx="36.1" cy="33.2" r="1.4" fill="#136226"/><circle cx="44.1" cy="23.0" r="0.9" fill="#0e5a1e"/><circle cx="27.3" cy="49.8" r="1.0" fill="#0e5a1e"/><circle cx="41.9" cy="58.0" r="1.6" fill="#0a3a12"/><circle cx="41.6" cy="33.1" r="1.4" fill="#0b4a18"/><circle cx="27.8" cy="50.5" r="0.9" fill="#0e5a1e"/><circle cx="42.8" cy="12.9" r="0.8" fill="#0a3a12"/><circle cx="26.4" cy="41.1" r="1.5" fill="#0b4a18"/><circle cx="35.0" cy="37.4" r="1.1" fill="#0a3a12"/><circle cx="30.2" cy="63.3" r="1.4" fill="#0e5a1e"/><circle cx="28.0" cy="46.4" r="1.5" fill="#136226"/><circle cx="27.9" cy="51.5" r="1.3" fill="#0e5a1e"/><circle cx="30.3" cy="60.9" r="1.3" fill="#0a3a12"/><circle cx="50.5" cy="34.0" r="0.9" fill="#0b4416"/><circle cx="22.4" cy="43.1" r="1.0" fill="#0b4a18"/><circle cx="22.6" cy="20.2" r="1.2" fill="#0a3a12"/><circle cx="35.4" cy="42.4" r="0.9" fill="#0b4416"/><circle cx="32.3" cy="32.8" r="1.5" fill="#0b4a18"/><circle cx="35.6" cy="19.4" r="1.4" fill="#136226"/><circle cx="21.6" cy="17.6" r="1.1" fill="#0e5a1e"/><circle cx="48.4" cy="53.6" r="1.0" fill="#0b4416"/><circle cx="41.0" cy="23.2" r="0.8" fill="#136226"/><circle cx="24.3" cy="39.5" r="0.8" fill="#0e5a1e"/><circle cx="45.3" cy="22.8" r="1.0" fill="#07300e"/><circle cx="32.8" cy="25.6" r="1.3" fill="#07300e"/><circle cx="28.5" cy="52.3" r="1.0" fill="#136226"/><circle cx="20.5" cy="31.0" r="1.1" fill="#07300e"/><circle cx="38.8" cy="35.1" r="1.1" fill="#0b4416"/><circle cx="44.1" cy="19.2" r="1.5" fill="#136226"/><circle cx="24.0" cy="18.8" r="1.1" fill="#0e5a1e"/><circle cx="33.1" cy="32.0" r="1.1" fill="#136226"/><circle cx="13.1" cy="44.5" r="1.3" fill="#0a3a12"/></g></svg>
<div class="a cap" style="left:673px;top:204px">9621, Tree type 2</div>
<svg class="a img" style="left:336px;top:248px" width="136" height="100"><g transform="translate(44,2)"><clipPath id="cp4"><polygon points="17,10.2 25.6,5.1 31.6,10.2 35.8,18.8 35.8,39.2 32.4,47.8 22.2,56.3 14.5,52.9 11.1,47.8 11.1,18.8"/></clipPath><path d="M20.6 56 L24.8 56 L24.3 91.3 L21.2 91.3 Z" fill="#5b3b2b"/><linearGradient id="cg" x1="0" x2="1"><stop offset="0" stop-color="#38a838"/><stop offset="0.45" stop-color="#2a8a2b"/><stop offset="0.55" stop-color="#1a5f1d"/><stop offset="0.7" stop-color="#2a8a2b"/><stop offset="1" stop-color="#34a034"/></linearGradient><polygon points="17,10.2 25.6,5.1 31.6,10.2 35.8,18.8 35.8,39.2 32.4,47.8 22.2,56.3 14.5,52.9 11.1,47.8 11.1,18.8" fill="url(#cg)"/><g clip-path="url(#cp4)"><circle cx="21.8" cy="54.1" r="0.5" fill="#15501a" opacity="0.85"/><circle cx="30.5" cy="50.3" r="0.8" fill="#1f6a20" opacity="0.85"/><circle cx="27.9" cy="53.3" r="0.6" fill="#48c048" opacity="0.85"/><circle cx="30.4" cy="31.8" r="0.4" fill="#15501a" opacity="0.85"/><circle cx="33.8" cy="7.8" r="0.7" fill="#268a28" opacity="0.85"/><circle cx="33.2" cy="48.7" r="0.7" fill="#0f3f12" opacity="0.85"/><circle cx="35.2" cy="52.2" r="0.5" fill="#15501a" opacity="0.85"/><circle cx="21.9" cy="28.8" r="0.8" fill="#0f3f12" opacity="0.85"/><circle cx="16.8" cy="35.6" r="0.7" fill="#0f3f12" opacity="0.85"/><circle cx="34.0" cy="31.9" r="0.6" fill="#268a28" opacity="0.85"/><circle cx="25.8" cy="35.3" r="0.9" fill="#48c048" opacity="0.85"/><circle cx="24.4" cy="21.7" r="0.5" fill="#0f3f12" opacity="0.85"/><circle cx="18.8" cy="42.6" r="0.9" fill="#15501a" opacity="0.85"/><circle cx="12.3" cy="54.4" r="0.8" fill="#15501a" opacity="0.85"/><circle cx="13.8" cy="14.5" r="0.9" fill="#48c048" opacity="0.85"/><circle cx="31.7" cy="45.7" r="0.7" fill="#268a28" opacity="0.85"/><circle cx="12.6" cy="49.4" r="0.8" fill="#268a28" opacity="0.85"/><circle cx="23.9" cy="22.8" r="0.5" fill="#1f6a20" opacity="0.85"/><circle cx="32.6" cy="15.0" r="0.5" fill="#48c048" opacity="0.85"/><circle cx="12.8" cy="33.3" r="0.8" fill="#15501a" opacity="0.85"/><circle cx="32.9" cy="8.7" r="0.6" fill="#1f6a20" opacity="0.85"/><circle cx="30.3" cy="33.0" r="0.9" fill="#48c048" opacity="0.85"/><circle cx="31.3" cy="14.1" r="0.6" fill="#268a28" opacity="0.85"/><circle cx="34.9" cy="16.2" r="0.5" fill="#15501a" opacity="0.85"/><circle cx="15.5" cy="24.8" r="0.8" fill="#0f3f12" opacity="0.85"/><circle cx="22.6" cy="29.9" r="0.4" fill="#48c048" opacity="0.85"/><circle cx="24.3" cy="21.1" r="0.9" fill="#48c048" opacity="0.85"/><circle cx="25.0" cy="55.7" r="0.6" fill="#268a28" opacity="0.85"/><circle cx="28.5" cy="48.1" r="0.9" fill="#0f3f12" opacity="0.85"/><circle cx="16.2" cy="15.7" r="0.8" fill="#48c048" opacity="0.85"/><circle cx="28.3" cy="28.8" r="0.5" fill="#1f6a20" opacity="0.85"/><circle cx="17.5" cy="22.5" r="0.7" fill="#268a28" opacity="0.85"/><circle cx="15.9" cy="55.7" r="0.7" fill="#268a28" opacity="0.85"/><circle cx="32.8" cy="44.3" r="0.5" fill="#1f6a20" opacity="0.85"/><circle cx="26.8" cy="26.7" r="0.8" fill="#15501a" opacity="0.85"/><circle cx="18.0" cy="11.8" r="0.5" fill="#1f6a20" opacity="0.85"/><circle cx="19.7" cy="40.9" r="0.5" fill="#0f3f12" opacity="0.85"/><circle cx="13.9" cy="11.3" r="0.8" fill="#1f6a20" opacity="0.85"/><circle cx="27.9" cy="28.2" r="0.9" fill="#15501a" opacity="0.85"/><circle cx="16.0" cy="26.1" r="0.5" fill="#1f6a20" opacity="0.85"/><circle cx="20.2" cy="22.0" r="0.7" fill="#268a28" opacity="0.85"/><circle cx="18.3" cy="40.4" r="0.7" fill="#48c048" opacity="0.85"/><circle cx="11.4" cy="24.1" r="0.7" fill="#268a28" opacity="0.85"/><circle cx="20.7" cy="19.2" r="0.5" fill="#0f3f12" opacity="0.85"/><circle cx="13.6" cy="38.5" r="0.6" fill="#48c048" opacity="0.85"/><circle cx="13.2" cy="23.5" r="0.6" fill="#0f3f12" opacity="0.85"/><circle cx="27.7" cy="22.5" r="0.8" fill="#1f6a20" opacity="0.85"/><circle cx="27.7" cy="12.9" r="0.4" fill="#48c048" opacity="0.85"/><circle cx="22.6" cy="21.1" r="0.7" fill="#0f3f12" opacity="0.85"/><circle cx="12.5" cy="16.3" r="0.4" fill="#15501a" opacity="0.85"/><circle cx="21.8" cy="16.7" r="0.7" fill="#1f6a20" opacity="0.85"/><circle cx="35.9" cy="8.4" r="0.6" fill="#15501a" opacity="0.85"/><circle cx="30.8" cy="52.5" r="0.7" fill="#0f3f12" opacity="0.85"/><circle cx="16.2" cy="23.9" r="0.5" fill="#15501a" opacity="0.85"/><circle cx="13.4" cy="45.5" r="0.4" fill="#0f3f12" opacity="0.85"/><circle cx="30.7" cy="51.2" r="0.7" fill="#15501a" opacity="0.85"/><circle cx="30.4" cy="11.1" r="0.6" fill="#1f6a20" opacity="0.85"/><circle cx="20.3" cy="23.7" r="0.8" fill="#1f6a20" opacity="0.85"/><circle cx="13.7" cy="26.1" r="0.7" fill="#1f6a20" opacity="0.85"/><circle cx="30.4" cy="9.8" r="0.9" fill="#0f3f12" opacity="0.85"/><circle cx="14.1" cy="34.0" r="0.5" fill="#1f6a20" opacity="0.85"/><circle cx="23.7" cy="20.7" r="0.6" fill="#48c048" opacity="0.85"/><circle cx="17.2" cy="26.1" r="0.4" fill="#48c048" opacity="0.85"/><circle cx="25.7" cy="13.7" r="0.5" fill="#48c048" opacity="0.85"/><circle cx="32.3" cy="10.3" r="0.8" fill="#48c048" opacity="0.85"/><circle cx="14.6" cy="33.8" r="0.5" fill="#0f3f12" opacity="0.85"/><circle cx="26.3" cy="49.1" r="0.9" fill="#15501a" opacity="0.85"/><circle cx="31.6" cy="16.7" r="0.8" fill="#1f6a20" opacity="0.85"/><circle cx="29.4" cy="41.3" r="0.5" fill="#0f3f12" opacity="0.85"/><circle cx="26.5" cy="25.7" r="0.6" fill="#0f3f12" opacity="0.85"/><circle cx="27.1" cy="48.2" r="0.4" fill="#15501a" opacity="0.85"/><circle cx="18.5" cy="15.9" r="0.7" fill="#15501a" opacity="0.85"/><circle cx="19.2" cy="29.9" r="0.7" fill="#0f3f12" opacity="0.85"/><circle cx="34.7" cy="34.0" r="0.7" fill="#1f6a20" opacity="0.85"/><circle cx="20.9" cy="20.3" r="0.8" fill="#268a28" opacity="0.85"/><circle cx="16.5" cy="9.3" r="0.8" fill="#15501a" opacity="0.85"/><circle cx="20.0" cy="27.0" r="0.6" fill="#1f6a20" opacity="0.85"/><circle cx="18.8" cy="32.1" r="0.5" fill="#15501a" opacity="0.85"/><circle cx="24.7" cy="25.4" r="0.5" fill="#1f6a20" opacity="0.85"/><circle cx="28.8" cy="6.7" r="0.6" fill="#48c048" opacity="0.85"/><circle cx="24.0" cy="31.9" r="0.8" fill="#268a28" opacity="0.85"/><circle cx="21.2" cy="54.3" r="0.4" fill="#0f3f12" opacity="0.85"/><circle cx="19.9" cy="17.6" r="0.9" fill="#268a28" opacity="0.85"/><circle cx="32.0" cy="15.7" r="0.8" fill="#1f6a20" opacity="0.85"/><circle cx="18.9" cy="30.4" r="0.7" fill="#268a28" opacity="0.85"/><circle cx="12.3" cy="9.7" r="0.5" fill="#268a28" opacity="0.85"/><circle cx="31.2" cy="53.1" r="0.7" fill="#268a28" opacity="0.85"/><circle cx="21.1" cy="19.6" r="0.7" fill="#1f6a20" opacity="0.85"/><circle cx="20.9" cy="16.5" r="0.5" fill="#1f6a20" opacity="0.85"/><circle cx="18.9" cy="46.8" r="0.8" fill="#268a28" opacity="0.85"/><circle cx="12.4" cy="43.9" r="0.4" fill="#0f3f12" opacity="0.85"/><circle cx="13.1" cy="12.1" r="0.6" fill="#1f6a20" opacity="0.85"/><circle cx="26.4" cy="39.8" r="0.5" fill="#0f3f12" opacity="0.85"/><circle cx="11.1" cy="42.6" r="0.6" fill="#1f6a20" opacity="0.85"/><circle cx="15.3" cy="9.3" r="0.7" fill="#48c048" opacity="0.85"/><circle cx="20.4" cy="27.8" r="0.6" fill="#1f6a20" opacity="0.85"/><circle cx="22.1" cy="50.8" r="0.8" fill="#1f6a20" opacity="0.85"/><circle cx="34.9" cy="23.2" r="0.8" fill="#1f6a20" opacity="0.85"/><circle cx="28.6" cy="25.3" r="0.7" fill="#0f3f12" opacity="0.85"/><circle cx="13.8" cy="49.3" r="0.4" fill="#268a28" opacity="0.85"/><circle cx="24.4" cy="47.8" r="0.5" fill="#268a28" opacity="0.85"/><circle cx="22.8" cy="6.6" r="0.6" fill="#15501a" opacity="0.85"/><circle cx="16.0" cy="40.8" r="0.6" fill="#15501a" opacity="0.85"/><circle cx="28.2" cy="24.8" r="0.8" fill="#1f6a20" opacity="0.85"/><circle cx="24.7" cy="48.6" r="0.8" fill="#268a28" opacity="0.85"/><circle cx="16.1" cy="22.7" r="0.5" fill="#268a28" opacity="0.85"/><circle cx="20.4" cy="46.0" r="0.7" fill="#15501a" opacity="0.85"/><circle cx="25.4" cy="48.0" r="0.6" fill="#0f3f12" opacity="0.85"/><circle cx="14.7" cy="40.9" r="0.6" fill="#1f6a20" opacity="0.85"/><circle cx="28.4" cy="16.9" r="0.5" fill="#15501a" opacity="0.85"/><circle cx="25.4" cy="18.1" r="0.4" fill="#268a28" opacity="0.85"/><circle cx="20.4" cy="41.5" r="0.6" fill="#0f3f12" opacity="0.85"/><circle cx="12.6" cy="14.2" r="0.6" fill="#0f3f12" opacity="0.85"/><circle cx="22.4" cy="29.8" r="0.5" fill="#0f3f12" opacity="0.85"/><circle cx="13.6" cy="20.6" r="0.8" fill="#1f6a20" opacity="0.85"/><circle cx="35.8" cy="22.9" r="0.5" fill="#15501a" opacity="0.85"/><circle cx="19.3" cy="12.7" r="0.9" fill="#268a28" opacity="0.85"/><circle cx="31.1" cy="10.0" r="0.8" fill="#48c048" opacity="0.85"/><circle cx="35.7" cy="48.9" r="0.8" fill="#268a28" opacity="0.85"/><circle cx="14.0" cy="44.0" r="0.7" fill="#268a28" opacity="0.85"/><circle cx="28.2" cy="23.6" r="0.9" fill="#268a28" opacity="0.85"/><circle cx="26.2" cy="47.4" r="0.9" fill="#1f6a20" opacity="0.85"/><circle cx="17.2" cy="6.0" r="0.7" fill="#268a28" opacity="0.85"/><circle cx="27.7" cy="19.6" r="0.7" fill="#268a28" opacity="0.85"/><circle cx="23.1" cy="18.9" r="0.5" fill="#268a28" opacity="0.85"/><circle cx="34.6" cy="12.8" r="0.6" fill="#0f3f12" opacity="0.85"/><circle cx="32.4" cy="36.1" r="0.7" fill="#48c048" opacity="0.85"/><circle cx="24.4" cy="38.7" r="0.9" fill="#268a28" opacity="0.85"/><circle cx="18.7" cy="26.8" r="0.8" fill="#0f3f12" opacity="0.85"/><circle cx="16.8" cy="28.1" r="0.6" fill="#48c048" opacity="0.85"/><circle cx="34.6" cy="30.8" r="0.7" fill="#268a28" opacity="0.85"/><circle cx="33.1" cy="8.8" r="0.7" fill="#0f3f12" opacity="0.85"/><circle cx="34.5" cy="38.5" r="0.4" fill="#1f6a20" opacity="0.85"/><circle cx="13.6" cy="33.8" r="0.5" fill="#268a28" opacity="0.85"/><circle cx="18.7" cy="49.5" r="0.4" fill="#1f6a20" opacity="0.85"/><circle cx="14.5" cy="26.1" r="0.5" fill="#0f3f12" opacity="0.85"/><circle cx="24.6" cy="27.3" r="0.7" fill="#1f6a20" opacity="0.85"/><circle cx="24.2" cy="23.1" r="0.6" fill="#48c048" opacity="0.85"/><circle cx="33.0" cy="10.2" r="0.5" fill="#48c048" opacity="0.85"/><circle cx="13.0" cy="29.8" r="0.7" fill="#0f3f12" opacity="0.85"/><circle cx="13.2" cy="50.9" r="0.5" fill="#48c048" opacity="0.85"/><circle cx="28.6" cy="52.9" r="0.9" fill="#48c048" opacity="0.85"/><circle cx="32.5" cy="52.7" r="0.4" fill="#15501a" opacity="0.85"/><circle cx="30.9" cy="55.8" r="0.7" fill="#0f3f12" opacity="0.85"/><circle cx="18.9" cy="13.6" r="0.8" fill="#48c048" opacity="0.85"/><circle cx="35.0" cy="6.6" r="0.5" fill="#268a28" opacity="0.85"/><circle cx="34.9" cy="6.2" r="0.4" fill="#48c048" opacity="0.85"/><circle cx="28.2" cy="31.5" r="0.7" fill="#1f6a20" opacity="0.85"/><circle cx="11.0" cy="8.5" r="0.8" fill="#15501a" opacity="0.85"/><circle cx="31.8" cy="25.8" r="0.6" fill="#268a28" opacity="0.85"/><circle cx="20.8" cy="50.8" r="0.5" fill="#1f6a20" opacity="0.85"/><circle cx="25.6" cy="31.8" r="0.6" fill="#268a28" opacity="0.85"/><circle cx="22.4" cy="17.0" r="0.8" fill="#48c048" opacity="0.85"/><circle cx="16.0" cy="15.8" r="0.6" fill="#48c048" opacity="0.85"/><circle cx="30.6" cy="22.0" r="0.5" fill="#0f3f12" opacity="0.85"/><circle cx="17.5" cy="31.7" r="0.5" fill="#1f6a20" opacity="0.85"/><circle cx="15.6" cy="16.8" r="0.6" fill="#268a28" opacity="0.85"/><circle cx="29.5" cy="15.4" r="0.4" fill="#48c048" opacity="0.85"/><circle cx="24.5" cy="9.0" r="0.8" fill="#48c048" opacity="0.85"/><circle cx="22.0" cy="7.3" r="0.7" fill="#48c048" opacity="0.85"/><circle cx="20.3" cy="23.2" r="0.9" fill="#15501a" opacity="0.85"/><circle cx="36.0" cy="26.4" r="0.7" fill="#48c048" opacity="0.85"/><circle cx="19.5" cy="45.3" r="0.6" fill="#268a28" opacity="0.85"/><circle cx="25.1" cy="53.1" r="0.4" fill="#1f6a20" opacity="0.85"/><circle cx="12.3" cy="6.7" r="0.9" fill="#15501a" opacity="0.85"/><circle cx="33.9" cy="12.3" r="0.5" fill="#15501a" opacity="0.85"/><circle cx="35.0" cy="52.5" r="0.6" fill="#48c048" opacity="0.85"/><circle cx="14.5" cy="41.4" r="0.9" fill="#48c048" opacity="0.85"/><circle cx="16.9" cy="40.8" r="0.5" fill="#15501a" opacity="0.85"/><circle cx="20.2" cy="42.1" r="0.9" fill="#48c048" opacity="0.85"/><circle cx="34.5" cy="8.7" r="0.5" fill="#268a28" opacity="0.85"/><circle cx="27.9" cy="11.3" r="0.6" fill="#0f3f12" opacity="0.85"/><circle cx="14.1" cy="31.9" r="0.7" fill="#0f3f12" opacity="0.85"/><circle cx="22.1" cy="46.0" r="0.5" fill="#1f6a20" opacity="0.85"/><circle cx="13.0" cy="16.4" r="0.4" fill="#268a28" opacity="0.85"/><circle cx="35.4" cy="52.6" r="0.7" fill="#48c048" opacity="0.85"/><circle cx="15.0" cy="21.9" r="0.7" fill="#268a28" opacity="0.85"/><circle cx="23.1" cy="50.6" r="0.7" fill="#268a28" opacity="0.85"/><circle cx="26.1" cy="48.1" r="0.6" fill="#48c048" opacity="0.85"/><circle cx="14.7" cy="28.9" r="0.7" fill="#15501a" opacity="0.85"/><circle cx="30.1" cy="25.4" r="0.4" fill="#48c048" opacity="0.85"/><circle cx="12.1" cy="25.5" r="0.8" fill="#1f6a20" opacity="0.85"/><circle cx="11.6" cy="26.6" r="0.9" fill="#0f3f12" opacity="0.85"/><circle cx="27.3" cy="28.7" r="0.5" fill="#1f6a20" opacity="0.85"/><circle cx="15.2" cy="54.6" r="0.6" fill="#0f3f12" opacity="0.85"/><circle cx="25.0" cy="40.1" r="0.5" fill="#268a28" opacity="0.85"/><circle cx="15.2" cy="12.3" r="0.7" fill="#0f3f12" opacity="0.85"/><circle cx="21.4" cy="32.5" r="0.6" fill="#268a28" opacity="0.85"/><circle cx="34.7" cy="30.1" r="0.7" fill="#0f3f12" opacity="0.85"/><circle cx="32.3" cy="50.0" r="0.5" fill="#0f3f12" opacity="0.85"/><circle cx="25.0" cy="51.9" r="0.8" fill="#268a28" opacity="0.85"/><circle cx="16.9" cy="34.8" r="0.5" fill="#268a28" opacity="0.85"/><circle cx="18.1" cy="9.9" r="0.7" fill="#268a28" opacity="0.85"/><circle cx="23.0" cy="10.7" r="0.8" fill="#0f3f12" opacity="0.85"/><circle cx="27.3" cy="40.0" r="0.7" fill="#15501a" opacity="0.85"/><circle cx="17.7" cy="34.3" r="0.7" fill="#15501a" opacity="0.85"/><circle cx="12.4" cy="21.3" r="0.7" fill="#1f6a20" opacity="0.85"/><circle cx="27.0" cy="54.5" r="0.5" fill="#15501a" opacity="0.85"/><circle cx="12.3" cy="19.3" r="0.4" fill="#0f3f12" opacity="0.85"/><circle cx="31.7" cy="45.7" r="0.5" fill="#0f3f12" opacity="0.85"/><circle cx="13.6" cy="23.0" r="0.4" fill="#1f6a20" opacity="0.85"/><circle cx="23.2" cy="29.6" r="0.5" fill="#0f3f12" opacity="0.85"/><circle cx="23.6" cy="52.2" r="0.7" fill="#15501a" opacity="0.85"/><circle cx="31.1" cy="54.9" r="0.9" fill="#48c048" opacity="0.85"/><circle cx="30.9" cy="41.3" r="0.8" fill="#48c048" opacity="0.85"/><circle cx="13.9" cy="29.3" r="0.8" fill="#1f6a20" opacity="0.85"/><circle cx="34.0" cy="6.2" r="0.7" fill="#268a28" opacity="0.85"/><circle cx="22.8" cy="37.8" r="0.7" fill="#15501a" opacity="0.85"/><circle cx="34.3" cy="37.9" r="0.4" fill="#48c048" opacity="0.85"/><circle cx="13.7" cy="55.1" r="0.8" fill="#268a28" opacity="0.85"/><circle cx="17.4" cy="36.1" r="0.8" fill="#268a28" opacity="0.85"/><circle cx="35.6" cy="36.8" r="0.5" fill="#1f6a20" opacity="0.85"/><circle cx="21.9" cy="25.8" r="0.6" fill="#1f6a20" opacity="0.85"/><circle cx="25.2" cy="53.1" r="0.7" fill="#15501a" opacity="0.85"/><circle cx="16.6" cy="41.3" r="0.4" fill="#48c048" opacity="0.85"/><circle cx="23.5" cy="54.9" r="0.5" fill="#0f3f12" opacity="0.85"/><circle cx="30.4" cy="40.4" r="0.7" fill="#268a28" opacity="0.85"/><circle cx="22.7" cy="40.2" r="0.4" fill="#268a28" opacity="0.85"/><circle cx="28.2" cy="53.1" r="0.6" fill="#1f6a20" opacity="0.85"/><circle cx="33.8" cy="19.8" r="0.9" fill="#0f3f12" opacity="0.85"/></g></g></svg>
<div class="a cap" style="left:315px;top:359px">1340, Conifer tree (3D)</div>
<svg class="a img" style="left:515px;top:248px" width="136" height="100"><g transform="translate(45,2)"><path d="M23.2 50 V65.3" stroke="#c8c8c8" stroke-width="1.6"/><path d="M23.6 52 V58" stroke="#606060" stroke-width="0.8"/><polygon points="15.1,6.9 27,5 32.7,11.3 38.3,25.1 37.7,35.2 32.7,42.7 23.9,51.5 16.3,46.5 10.7,35.2 10,25.1 12.6,13.8" fill="#0f7a12"/><polygon points="12.6,13.8 10,25.1 10.7,35.2 16.3,46.5 20,40 16,28 14,18" fill="#0a5a0c"/><polygon points="10.7,35.2 16.3,46.5 23.9,51.5 20,44 14,36" fill="#074a09"/><polygon points="20,25 25,23 30,27 25,29" fill="#085a0b"/><polygon points="20,38 38,30 37.7,35.2 32.7,42.7 24,45" fill="#0c6a0f"/><polygon points="15.1,6.9 27,5 32.7,11.3 22,14" fill="#138a16"/></g></svg>
<div class="a cap" style="left:494px;top:359px">1341, Birch</div>
<svg class="a img" style="left:694px;top:248px" width="136" height="100"><g transform="translate(41,2)"><clipPath id="sc3"><path d="M27.3 8.5 L9.4 74.3 Q27.3 86 46.1 74.3 Z"/></clipPath><rect x="25.6" y="78" width="3.2" height="11.7" fill="#2b1a10"/><g clip-path="url(#sc3)"><path d="M27.3 8.5 L9.4 74.3 Q27.3 86 46.1 74.3 Z" fill="#1d581d"/><circle cx="24.6" cy="50.5" r="0.5" fill="#0e360e" opacity="0.8"/><circle cx="27.3" cy="10.6" r="0.9" fill="#134013" opacity="0.8"/><circle cx="34.8" cy="41.9" r="0.8" fill="#0e360e" opacity="0.8"/><circle cx="31.1" cy="45.0" r="0.7" fill="#0e360e" opacity="0.8"/><circle cx="20.6" cy="47.9" r="0.4" fill="#134013" opacity="0.8"/><circle cx="37.0" cy="53.2" r="0.8" fill="#0e360e" opacity="0.8"/><circle cx="32.0" cy="45.3" r="0.5" fill="#2a702a" opacity="0.8"/><circle cx="23.9" cy="32.2" r="0.9" fill="#134013" opacity="0.8"/><circle cx="40.0" cy="68.6" r="0.6" fill="#2a702a" opacity="0.8"/><circle cx="17.7" cy="70.6" r="0.9" fill="#2a702a" opacity="0.8"/><circle cx="26.7" cy="17.9" r="0.7" fill="#134013" opacity="0.8"/><circle cx="30.5" cy="34.8" r="0.9" fill="#0e360e" opacity="0.8"/><circle cx="27.5" cy="10.0" r="0.5" fill="#134013" opacity="0.8"/><circle cx="34.0" cy="41.7" r="0.5" fill="#134013" opacity="0.8"/><circle cx="29.0" cy="52.9" r="0.7" fill="#134013" opacity="0.8"/><circle cx="25.2" cy="47.7" r="0.8" fill="#134013" opacity="0.8"/><circle cx="17.1" cy="64.6" r="1.0" fill="#0e360e" opacity="0.8"/><circle cx="11.3" cy="78.4" r="0.7" fill="#0e360e" opacity="0.8"/><circle cx="35.4" cy="72.9" r="0.8" fill="#0e360e" opacity="0.8"/><circle cx="13.3" cy="80.4" r="0.8" fill="#134013" opacity="0.8"/><circle cx="27.4" cy="28.6" r="0.8" fill="#0e360e" opacity="0.8"/><circle cx="28.8" cy="54.2" r="0.8" fill="#2a702a" opacity="0.8"/><circle cx="30.3" cy="23.9" r="0.6" fill="#134013" opacity="0.8"/><circle cx="36.8" cy="46.6" r="0.7" fill="#134013" opacity="0.8"/><circle cx="29.3" cy="45.0" r="0.4" fill="#134013" opacity="0.8"/><circle cx="26.6" cy="32.9" r="0.6" fill="#134013" opacity="0.8"/><circle cx="23.8" cy="40.0" r="0.7" fill="#134013" opacity="0.8"/><circle cx="28.1" cy="14.0" r="0.9" fill="#2a702a" opacity="0.8"/><circle cx="32.2" cy="42.8" r="0.7" fill="#134013" opacity="0.8"/><circle cx="21.8" cy="48.1" r="1.0" fill="#2a702a" opacity="0.8"/><circle cx="37.8" cy="53.4" r="0.7" fill="#134013" opacity="0.8"/><circle cx="18.1" cy="62.8" r="0.9" fill="#2a702a" opacity="0.8"/><circle cx="28.7" cy="14.6" r="0.9" fill="#2a702a" opacity="0.8"/><circle cx="44.6" cy="77.8" r="0.8" fill="#134013" opacity="0.8"/><circle cx="27.1" cy="17.2" r="0.9" fill="#2a702a" opacity="0.8"/><circle cx="39.5" cy="59.5" r="0.6" fill="#134013" opacity="0.8"/><circle cx="22.4" cy="51.6" r="1.0" fill="#0e360e" opacity="0.8"/><circle cx="32.1" cy="56.2" r="0.4" fill="#2a702a" opacity="0.8"/><circle cx="27.9" cy="26.9" r="0.9" fill="#0e360e" opacity="0.8"/><circle cx="16.0" cy="74.7" r="0.8" fill="#0e360e" opacity="0.8"/><circle cx="27.1" cy="74.4" r="0.5" fill="#134013" opacity="0.8"/><circle cx="21.7" cy="37.8" r="0.9" fill="#134013" opacity="0.8"/><circle cx="30.3" cy="28.7" r="0.9" fill="#134013" opacity="0.8"/><circle cx="26.8" cy="29.8" r="0.7" fill="#2a702a" opacity="0.8"/><circle cx="27.6" cy="21.1" r="0.8" fill="#2a702a" opacity="0.8"/><circle cx="37.8" cy="55.0" r="0.4" fill="#0e360e" opacity="0.8"/><circle cx="28.8" cy="74.8" r="0.7" fill="#0e360e" opacity="0.8"/><circle cx="35.3" cy="61.3" r="0.9" fill="#0e360e" opacity="0.8"/><circle cx="22.5" cy="55.4" r="0.8" fill="#0e360e" opacity="0.8"/><circle cx="23.6" cy="26.4" r="0.7" fill="#134013" opacity="0.8"/><circle cx="30.4" cy="52.2" r="0.4" fill="#0e360e" opacity="0.8"/><circle cx="26.5" cy="14.6" r="0.7" fill="#2a702a" opacity="0.8"/><circle cx="34.7" cy="71.3" r="0.8" fill="#134013" opacity="0.8"/><circle cx="27.7" cy="15.5" r="0.8" fill="#0e360e" opacity="0.8"/><circle cx="29.1" cy="47.1" r="0.4" fill="#134013" opacity="0.8"/><circle cx="19.0" cy="59.3" r="0.4" fill="#2a702a" opacity="0.8"/><circle cx="28.6" cy="60.3" r="0.7" fill="#0e360e" opacity="0.8"/><circle cx="22.2" cy="68.8" r="0.9" fill="#134013" opacity="0.8"/><circle cx="26.2" cy="50.6" r="0.5" fill="#2a702a" opacity="0.8"/><circle cx="39.5" cy="79.8" r="0.5" fill="#2a702a" opacity="0.8"/><circle cx="25.9" cy="63.0" r="0.5" fill="#134013" opacity="0.8"/><circle cx="23.8" cy="23.7" r="0.4" fill="#0e360e" opacity="0.8"/><circle cx="22.7" cy="79.3" r="0.8" fill="#2a702a" opacity="0.8"/><circle cx="19.3" cy="60.4" r="0.9" fill="#134013" opacity="0.8"/><circle cx="24.0" cy="34.7" r="0.7" fill="#134013" opacity="0.8"/><circle cx="26.8" cy="12.4" r="0.8" fill="#134013" opacity="0.8"/><circle cx="25.4" cy="54.0" r="0.9" fill="#2a702a" opacity="0.8"/><circle cx="30.8" cy="72.8" r="0.5" fill="#134013" opacity="0.8"/><circle cx="16.9" cy="63.5" r="0.4" fill="#134013" opacity="0.8"/><circle cx="37.7" cy="79.3" r="0.9" fill="#134013" opacity="0.8"/><circle cx="41.5" cy="74.2" r="1.0" fill="#134013" opacity="0.8"/><circle cx="27.1" cy="14.6" r="0.6" fill="#2a702a" opacity="0.8"/><circle cx="23.9" cy="52.3" r="0.9" fill="#2a702a" opacity="0.8"/><circle cx="18.7" cy="48.4" r="0.6" fill="#2a702a" opacity="0.8"/><circle cx="29.1" cy="59.5" r="0.7" fill="#134013" opacity="0.8"/><circle cx="19.8" cy="41.6" r="0.5" fill="#2a702a" opacity="0.8"/><circle cx="19.8" cy="55.5" r="0.8" fill="#0e360e" opacity="0.8"/><circle cx="42.5" cy="75.2" r="0.5" fill="#2a702a" opacity="0.8"/><circle cx="30.9" cy="78.6" r="1.0" fill="#0e360e" opacity="0.8"/><circle cx="18.7" cy="66.5" r="0.7" fill="#2a702a" opacity="0.8"/><circle cx="28.3" cy="20.3" r="0.7" fill="#134013" opacity="0.8"/><circle cx="21.4" cy="73.6" r="0.9" fill="#0e360e" opacity="0.8"/><circle cx="26.5" cy="53.0" r="0.4" fill="#0e360e" opacity="0.8"/><circle cx="23.9" cy="32.3" r="1.0" fill="#2a702a" opacity="0.8"/><circle cx="25.9" cy="16.3" r="0.5" fill="#134013" opacity="0.8"/><circle cx="34.0" cy="53.4" r="0.6" fill="#2a702a" opacity="0.8"/><circle cx="29.0" cy="45.7" r="0.9" fill="#0e360e" opacity="0.8"/><circle cx="23.3" cy="64.0" r="0.6" fill="#2a702a" opacity="0.8"/><circle cx="29.6" cy="76.2" r="0.9" fill="#134013" opacity="0.8"/><circle cx="15.0" cy="57.1" r="0.8" fill="#134013" opacity="0.8"/><circle cx="27.6" cy="37.9" r="0.9" fill="#2a702a" opacity="0.8"/><circle cx="36.1" cy="75.8" r="0.6" fill="#134013" opacity="0.8"/><circle cx="26.8" cy="53.9" r="1.0" fill="#134013" opacity="0.8"/><circle cx="31.5" cy="41.7" r="0.6" fill="#0e360e" opacity="0.8"/><circle cx="26.3" cy="17.4" r="0.6" fill="#0e360e" opacity="0.8"/><circle cx="30.5" cy="30.7" r="0.8" fill="#134013" opacity="0.8"/><circle cx="23.9" cy="49.9" r="0.8" fill="#134013" opacity="0.8"/><circle cx="17.5" cy="75.5" r="0.5" fill="#0e360e" opacity="0.8"/><circle cx="15.1" cy="57.0" r="0.7" fill="#134013" opacity="0.8"/><circle cx="34.9" cy="77.3" r="0.7" fill="#134013" opacity="0.8"/><circle cx="32.8" cy="44.6" r="0.9" fill="#2a702a" opacity="0.8"/><circle cx="39.8" cy="60.7" r="0.7" fill="#134013" opacity="0.8"/><circle cx="12.3" cy="78.7" r="0.6" fill="#134013" opacity="0.8"/><circle cx="41.7" cy="68.3" r="0.5" fill="#0e360e" opacity="0.8"/><circle cx="27.6" cy="11.8" r="0.6" fill="#134013" opacity="0.8"/><circle cx="15.4" cy="79.2" r="0.4" fill="#0e360e" opacity="0.8"/><circle cx="19.7" cy="57.7" r="0.9" fill="#2a702a" opacity="0.8"/><circle cx="22.4" cy="65.0" r="0.6" fill="#134013" opacity="0.8"/><circle cx="32.8" cy="46.8" r="0.7" fill="#0e360e" opacity="0.8"/><circle cx="26.0" cy="16.3" r="0.5" fill="#0e360e" opacity="0.8"/><circle cx="31.3" cy="65.2" r="0.9" fill="#0e360e" opacity="0.8"/><circle cx="32.1" cy="45.2" r="0.9" fill="#0e360e" opacity="0.8"/><circle cx="26.1" cy="27.8" r="1.0" fill="#2a702a" opacity="0.8"/><circle cx="26.5" cy="26.7" r="0.8" fill="#0e360e" opacity="0.8"/><circle cx="16.4" cy="61.0" r="1.0" fill="#0e360e" opacity="0.8"/><circle cx="25.5" cy="36.6" r="0.9" fill="#2a702a" opacity="0.8"/><circle cx="39.2" cy="55.1" r="0.8" fill="#0e360e" opacity="0.8"/><circle cx="22.8" cy="54.6" r="0.9" fill="#134013" opacity="0.8"/><circle cx="17.2" cy="73.3" r="0.8" fill="#2a702a" opacity="0.8"/><circle cx="22.8" cy="40.2" r="0.5" fill="#0e360e" opacity="0.8"/><circle cx="22.7" cy="47.4" r="1.0" fill="#2a702a" opacity="0.8"/><circle cx="34.3" cy="41.2" r="0.7" fill="#134013" opacity="0.8"/><circle cx="31.6" cy="26.0" r="0.5" fill="#134013" opacity="0.8"/><circle cx="28.1" cy="13.1" r="0.8" fill="#2a702a" opacity="0.8"/><circle cx="32.2" cy="43.2" r="0.9" fill="#134013" opacity="0.8"/><circle cx="33.4" cy="64.9" r="1.0" fill="#134013" opacity="0.8"/><circle cx="22.6" cy="35.2" r="0.7" fill="#2a702a" opacity="0.8"/><circle cx="30.3" cy="44.0" r="0.9" fill="#2a702a" opacity="0.8"/><circle cx="27.8" cy="65.9" r="0.6" fill="#134013" opacity="0.8"/><circle cx="20.5" cy="79.2" r="0.7" fill="#2a702a" opacity="0.8"/><circle cx="37.2" cy="48.8" r="0.7" fill="#134013" opacity="0.8"/><circle cx="26.6" cy="18.2" r="0.8" fill="#0e360e" opacity="0.8"/><circle cx="24.2" cy="33.7" r="0.7" fill="#134013" opacity="0.8"/><circle cx="38.6" cy="80.2" r="0.7" fill="#0e360e" opacity="0.8"/><circle cx="29.0" cy="30.4" r="0.9" fill="#0e360e" opacity="0.8"/><circle cx="27.2" cy="41.1" r="0.6" fill="#134013" opacity="0.8"/><circle cx="35.8" cy="45.8" r="1.0" fill="#2a702a" opacity="0.8"/><circle cx="22.3" cy="29.2" r="0.6" fill="#134013" opacity="0.8"/><circle cx="29.5" cy="54.0" r="0.4" fill="#2a702a" opacity="0.8"/><circle cx="24.2" cy="59.5" r="0.6" fill="#134013" opacity="0.8"/><circle cx="11.8" cy="79.1" r="0.7" fill="#2a702a" opacity="0.8"/><circle cx="29.6" cy="27.0" r="0.9" fill="#134013" opacity="0.8"/><circle cx="23.8" cy="39.9" r="0.8" fill="#0e360e" opacity="0.8"/><circle cx="22.2" cy="61.4" r="0.8" fill="#2a702a" opacity="0.8"/><circle cx="27.5" cy="18.4" r="0.8" fill="#134013" opacity="0.8"/><circle cx="28.9" cy="21.0" r="0.9" fill="#2a702a" opacity="0.8"/><circle cx="27.2" cy="20.2" r="0.8" fill="#0e360e" opacity="0.8"/><circle cx="40.2" cy="59.4" r="0.7" fill="#2a702a" opacity="0.8"/><circle cx="37.8" cy="55.0" r="0.7" fill="#134013" opacity="0.8"/><circle cx="25.5" cy="64.8" r="0.8" fill="#0e360e" opacity="0.8"/><circle cx="34.9" cy="64.5" r="0.5" fill="#134013" opacity="0.8"/><circle cx="21.7" cy="72.5" r="0.8" fill="#0e360e" opacity="0.8"/><circle cx="45.1" cy="78.1" r="0.6" fill="#134013" opacity="0.8"/><circle cx="32.3" cy="28.6" r="0.8" fill="#2a702a" opacity="0.8"/><circle cx="20.2" cy="41.7" r="0.9" fill="#0e360e" opacity="0.8"/><circle cx="21.1" cy="38.3" r="0.7" fill="#2a702a" opacity="0.8"/><circle cx="30.7" cy="69.8" r="0.9" fill="#134013" opacity="0.8"/><circle cx="23.0" cy="39.9" r="0.6" fill="#2a702a" opacity="0.8"/><circle cx="17.6" cy="49.8" r="0.5" fill="#0e360e" opacity="0.8"/><circle cx="29.8" cy="74.5" r="0.4" fill="#0e360e" opacity="0.8"/></g></g></svg>
<div class="a cap" style="left:673px;top:359px">1342, Spruce (3D)</div>
<svg class="a img" style="left:336px;top:403px" width="136" height="100"><g transform="translate(44,2)"><path d="M23.9 70 V88.7" stroke="#4a4a4a" stroke-width="1.4"/><polygon points="23.9,8.5 27,20 30,36 33,55 35,72 30,80 18,80 13,72 15,55 18,36 21,20" fill="#123f17"/><polygon points="23.9,7.8 25.4,13.0 21.3,12.5" fill="#0a260c"/><polygon points="23.9,7.8 22.4,13.0 26.7,12.0" fill="#1f6a27"/><polygon points="23.9,11.1 25.4,16.3 20.0,16.5" fill="#1a5a21"/><polygon points="23.9,11.1 22.4,16.3 28.0,15.8" fill="#0f3814"/><polygon points="23.9,14.0 25.4,19.2 19.5,20.6" fill="#1a5a21"/><polygon points="23.9,14.0 22.4,19.2 28.9,20.0" fill="#1f6a27"/><polygon points="23.9,17.2 25.4,22.4 18.7,23.7" fill="#1f6a27"/><polygon points="23.9,17.2 22.4,22.4 29.9,24.4" fill="#0a260c"/><polygon points="23.9,19.7 25.4,24.9 17.0,26.2" fill="#144a1b"/><polygon points="23.9,19.7 22.4,24.9 30.4,27.4" fill="#0a260c"/><polygon points="23.9,22.6 25.4,27.8 17.0,31.3" fill="#1f6a27"/><polygon points="23.9,22.6 22.4,27.8 32.0,30.1" fill="#1a5a21"/><polygon points="23.9,25.3 25.4,30.5 14.8,35.5" fill="#0f3814"/><polygon points="23.9,25.3 22.4,30.5 33.1,33.0" fill="#0f3814"/><polygon points="23.9,28.3 25.4,33.5 14.0,37.0" fill="#1a5a21"/><polygon points="23.9,28.3 22.4,33.5 33.9,37.7" fill="#0a260c"/><polygon points="23.9,31.7 25.4,36.9 13.6,41.7" fill="#1f6a27"/><polygon points="23.9,31.7 22.4,36.9 34.0,40.6" fill="#144a1b"/><polygon points="23.9,34.4 25.4,39.6 12.2,47.7" fill="#144a1b"/><polygon points="23.9,34.4 22.4,39.6 35.1,45.9" fill="#0f3814"/><polygon points="23.9,37.1 25.4,42.3 11.6,49.4" fill="#0f3814"/><polygon points="23.9,37.1 22.4,42.3 34.9,49.9" fill="#0a260c"/><polygon points="23.9,40.4 25.4,45.6 11.3,54.6" fill="#0a260c"/><polygon points="23.9,40.4 22.4,45.6 36.3,51.7" fill="#1a5a21"/><polygon points="23.9,43.7 25.4,48.9 10.2,58.4" fill="#0f3814"/><polygon points="23.9,43.7 22.4,48.9 39.2,59.8" fill="#1f6a27"/><polygon points="23.9,47.1 25.4,52.3 9.8,63.1" fill="#144a1b"/><polygon points="23.9,47.1 22.4,52.3 40.3,61.7" fill="#1f6a27"/><polygon points="23.9,50.3 25.4,55.5 6.2,64.2" fill="#0f3814"/><polygon points="23.9,50.3 22.4,55.5 38.6,67.5" fill="#1f6a27"/><polygon points="23.9,52.8 25.4,58.0 8.0,70.8" fill="#0a260c"/><polygon points="23.9,52.8 22.4,58.0 38.9,67.1" fill="#1f6a27"/><polygon points="23.9,55.4 25.4,60.6 7.8,73.6" fill="#1a5a21"/><polygon points="23.9,55.4 22.4,60.6 41.4,71.1" fill="#0a260c"/><polygon points="23.9,58.1 25.4,63.3 6.7,76.3" fill="#1f6a27"/><polygon points="23.9,58.1 22.4,63.3 38.9,72.1" fill="#0a260c"/><polygon points="23.9,61.4 25.4,66.6 5.9,77.7" fill="#1f6a27"/><polygon points="23.9,61.4 22.4,66.6 40.5,79.6" fill="#1f6a27"/><polygon points="23.9,64.2 25.4,69.4 7.2,78.6" fill="#144a1b"/><polygon points="23.9,64.2 22.4,69.4 40.1,77.6" fill="#144a1b"/><polygon points="23.9,66.9 25.4,72.1 7.9,81.2" fill="#0f3814"/><polygon points="23.9,66.9 22.4,72.1 40.2,81.5" fill="#1a5a21"/><polygon points="23.9,69.6 25.4,74.8 8.7,81.5" fill="#144a1b"/><polygon points="23.9,69.6 22.4,74.8 41.0,81.5" fill="#144a1b"/></g></svg>
<div class="a cap" style="left:315px;top:514px">1343, Spruce</div>
<svg class="a img" style="left:515px;top:403px" width="136" height="100"><g transform="translate(15,7)"><clipPath id="bc"><rect x="0" y="0" width="110" height="76"/></clipPath><g clip-path="url(#bc)"><ellipse cx="49" cy="58" rx="19" ry="15" fill="#163e1a"/><polygon points="64.5,72.3 61.7,72.3 63.7,26.1" fill="#3a9a44"/><polygon points="60.3,69.4 58.3,67.9 84.2,34.2" fill="#3a9a44"/><polygon points="53.0,68.7 51.3,67.5 78.6,28.8" fill="#0f3a14"/><polygon points="61.0,66.2 60.7,68.7 19.5,61.9" fill="#1f6a28"/><polygon points="50.5,67.9 49.7,65.0 85.2,57.1" fill="#14461a"/><polygon points="64.5,72.3 61.9,71.0 68.7,60.1" fill="#3a9a44"/><polygon points="58.1,63.9 56.0,64.7 47.8,41.1" fill="#2e8a3a"/><polygon points="46.5,72.8 43.9,72.2 54.3,29.6" fill="#3a9a44"/><polygon points="39.9,59.6 40.7,62.4 26.7,65.1" fill="#14461a"/><polygon points="44.1,60.7 42.3,61.7 23.5,27.2" fill="#14461a"/><polygon points="37.2,68.1 36.1,66.1 65.1,51.3" fill="#14461a"/><polygon points="59.1,64.3 57.3,63.0 66.0,53.4" fill="#1f6a28"/><polygon points="57.8,64.2 55.2,64.1 56.9,46.7" fill="#14461a"/><polygon points="51.1,69.4 50.5,72.7 6.9,62.6" fill="#2e8a3a"/><polygon points="37.8,61.8 35.7,62.6 32.5,51.2" fill="#0f3a14"/><polygon points="45.8,65.6 45.6,62.9 92.8,60.3" fill="#14461a"/><polygon points="47.5,68.1 44.6,69.6 23.7,25.0" fill="#1f6a28"/><polygon points="38.5,64.3 36.1,63.2 54.2,25.8" fill="#2e8a3a"/><polygon points="61.7,66.5 60.6,68.0 15.8,34.2" fill="#1a5a22"/><polygon points="60.3,68.3 57.5,67.3 74.1,23.2" fill="#0f3a14"/><polygon points="55.5,72.3 53.5,69.7 73.6,56.7" fill="#14461a"/><polygon points="48.3,70.7 46.2,71.2 41.4,45.9" fill="#3a9a44"/><polygon points="50.0,68.9 48.6,70.7 33.8,58.1" fill="#2e8a3a"/><polygon points="56.7,65.2 54.8,66.6 30.9,34.8" fill="#1a5a22"/><polygon points="49.6,63.4 49.5,65.5 12.7,63.4" fill="#0f3a14"/><polygon points="52.7,66.1 50.6,67.2 38.1,42.0" fill="#1f6a28"/><polygon points="48.8,68.0 47.7,66.4 75.1,47.1" fill="#0f3a14"/><polygon points="44.3,70.1 41.2,70.9 34.0,37.7" fill="#0f3a14"/><polygon points="63.9,64.5 61.4,64.9 60.4,51.5" fill="#2e8a3a"/><polygon points="65.0,69.7 63.6,68.5 67.4,65.6" fill="#1a5a22"/><polygon points="40.9,69.3 38.6,66.9 78.1,31.9" fill="#2e8a3a"/><polygon points="56.3,61.2 56.2,63.5 9.7,60.8" fill="#14461a"/><polygon points="41.8,67.9 39.2,68.1 37.0,32.1" fill="#1f6a28"/><polygon points="37.6,62.0 38.8,64.5 31.7,66.4" fill="#0f3a14"/><polygon points="47.5,60.8 46.4,62.3 13.5,36.8" fill="#2a7a34"/><polygon points="40.8,64.6 38.5,66.4 19.4,39.5" fill="#2e8a3a"/><polygon points="48.8,65.9 48.0,63.1 93.1,52.0" fill="#14461a"/><polygon points="47.9,68.1 44.5,69.1 38.0,40.3" fill="#1f6a28"/><polygon points="57.3,62.4 54.4,62.6 52.9,22.2" fill="#2a7a34"/><polygon points="45.3,70.9 43.6,73.1 14.1,49.6" fill="#1f6a28"/><polygon points="44.4,68.2 43.0,66.4 82.5,36.4" fill="#1a5a22"/><polygon points="44.8,70.9 43.6,73.9 5.5,56.9" fill="#1a5a22"/><polygon points="47.2,68.6 46.2,70.5 24.7,57.4" fill="#0f3a14"/><polygon points="38.0,65.5 35.6,64.1 64.0,19.6" fill="#2e8a3a"/><polygon points="40.3,61.9 37.5,62.5 30.0,22.2" fill="#1f6a28"/><polygon points="48.9,66.6 45.5,65.9 53.4,38.9" fill="#2e8a3a"/><polygon points="59.5,59.8 57.7,62.3 38.7,47.0" fill="#2e8a3a"/><polygon points="60.5,70.8 59.6,73.2 29.8,60.9" fill="#1a5a22"/><polygon points="43.9,63.2 41.2,61.0 74.4,22.1" fill="#0f3a14"/><polygon points="50.6,61.8 49.5,64.7 34.7,57.6" fill="#14461a"/><polygon points="46.2,64.7 46.2,62.3 82.8,63.1" fill="#2a7a34"/><polygon points="57.2,69.7 54.9,70.8 43.5,42.4" fill="#0f3a14"/><polygon points="61.2,68.5 57.9,68.4 61.2,22.0" fill="#14461a"/><polygon points="64.0,64.6 62.4,65.5 46.2,35.0" fill="#2a7a34"/><polygon points="42.5,61.9 42.1,63.8 7.0,54.4" fill="#2e8a3a"/><polygon points="37.3,62.2 37.1,64.1 18.8,61.3" fill="#14461a"/><polygon points="55.6,65.9 54.1,63.8 67.4,55.9" fill="#3a9a44"/><polygon points="62.4,68.6 60.0,67.6 78.3,27.3" fill="#14461a"/><polygon points="50.6,63.6 47.9,62.4 65.0,24.9" fill="#2e8a3a"/><polygon points="47.5,63.8 46.1,66.9 22.6,54.6" fill="#1f6a28"/><polygon points="52.5,60.6 51.0,63.5 13.9,42.9" fill="#1a5a22"/><polygon points="45.5,62.9 43.1,64.1 32.9,39.7" fill="#2e8a3a"/><polygon points="46.1,70.9 45.8,68.6 92.6,62.8" fill="#2e8a3a"/><polygon points="55.9,70.1 55.2,67.5 80.2,62.5" fill="#1f6a28"/><polygon points="40.7,69.0 38.5,68.5 48.7,23.7" fill="#0f3a14"/><polygon points="43.9,72.8 42.1,72.5 48.4,39.5" fill="#0f3a14"/><polygon points="37.9,63.8 36.1,63.1 44.1,45.5" fill="#14461a"/><polygon points="63.2,68.5 60.5,69.9 33.7,17.8" fill="#1f6a28"/><polygon points="49.6,65.6 49.2,62.6 85.0,59.3" fill="#0f3a14"/><polygon points="50.5,70.0 48.3,70.0 49.9,37.7" fill="#1f6a28"/><polygon points="63.0,67.2 62.3,69.7 26.6,58.5" fill="#3a9a44"/><polygon points="37.3,62.8 35.7,60.1 81.4,34.6" fill="#14461a"/><polygon points="42.7,60.8 39.4,61.4 34.2,25.4" fill="#1a5a22"/><polygon points="51.5,65.6 50.1,64.2 77.1,38.2" fill="#2e8a3a"/><polygon points="43.8,70.8 42.1,69.8 68.2,27.7" fill="#14461a"/><polygon points="38.7,63.6 36.9,63.7 35.3,28.0" fill="#14461a"/><polygon points="59.2,60.0 57.1,62.6 31.3,39.6" fill="#14461a"/><polygon points="45.4,62.1 44.3,60.6 76.6,37.8" fill="#1f6a28"/><polygon points="42.5,66.3 40.2,67.3 24.5,25.1" fill="#2a7a34"/><polygon points="44.3,72.6 41.4,71.0 64.4,32.7" fill="#2e8a3a"/><polygon points="51.8,70.4 51.1,73.2 16.8,63.2" fill="#1a5a22"/><polygon points="57.7,67.3 55.8,69.1 25.4,36.6" fill="#3a9a44"/><polygon points="51.2,67.4 48.7,67.7 45.6,20.8" fill="#0f3a14"/><polygon points="41.3,61.8 38.8,59.9 66.9,25.5" fill="#0f3a14"/><polygon points="49.9,70.2 47.8,71.0 34.5,30.8" fill="#2e8a3a"/><polygon points="41.3,67.7 39.1,65.3 76.6,31.3" fill="#3a9a44"/><polygon points="60.1,63.9 58.4,65.0 32.2,24.2" fill="#2e8a3a"/><polygon points="50.4,70.4 48.6,67.7 83.1,48.0" fill="#2a7a34"/><polygon points="55.1,65.3 54.8,62.7 95.2,58.8" fill="#1f6a28"/><polygon points="38.7,63.6 36.6,62.6 51.7,30.9" fill="#3a9a44"/><polygon points="61.7,60.1 60.4,63.0 15.3,41.1" fill="#14461a"/><polygon points="58.0,69.0 56.7,65.8 80.0,58.3" fill="#0f3a14"/><polygon points="63.5,62.5 61.7,62.1 70.3,30.8" fill="#1f6a28"/><polygon points="60.9,69.0 57.5,68.2 63.7,49.2" fill="#0f3a14"/><polygon points="38.2,66.7 37.1,65.0 75.0,41.5" fill="#1a5a22"/><polygon points="47.8,62.8 46.2,61.7 63.6,38.6" fill="#1f6a28"/><polygon points="41.2,67.3 39.1,66.1 64.1,25.0" fill="#2e8a3a"/><polygon points="39.3,70.6 36.9,69.1 64.9,27.5" fill="#2e8a3a"/><polygon points="40.7,71.0 38.8,73.7 28.6,64.4" fill="#14461a"/><polygon points="61.7,71.6 59.0,72.6 43.8,27.2" fill="#1f6a28"/><polygon points="51.8,61.4 50.4,63.0 22.7,39.0" fill="#3a9a44"/><polygon points="37.7,68.9 35.6,66.5 56.7,49.8" fill="#0f3a14"/><polygon points="65.0,63.1 62.6,64.8 48.1,41.8" fill="#0f3a14"/><polygon points="56.4,64.3 55.9,67.8 29.8,62.8" fill="#1a5a22"/><polygon points="49.5,64.1 47.2,65.3 38.7,46.9" fill="#1f6a28"/><polygon points="50.0,64.9 48.4,67.0 36.0,56.3" fill="#1a5a22"/><polygon points="56.3,62.2 53.7,63.0 47.2,36.4" fill="#14461a"/><polygon points="54.6,62.4 51.4,61.5 61.0,30.8" fill="#14461a"/><polygon points="56.1,62.5 54.9,63.9 19.6,31.6" fill="#2a7a34"/><polygon points="43.1,68.0 42.7,70.4 20.9,65.1" fill="#14461a"/><polygon points="43.3,63.6 41.3,64.5 32.5,41.9" fill="#2a7a34"/><polygon points="51.6,68.5 49.9,71.3 12.2,47.4" fill="#3a9a44"/><polygon points="47.9,63.4 44.4,64.0 43.6,49.9" fill="#1a5a22"/><polygon points="63.0,61.0 60.5,61.9 56.4,47.7" fill="#3a9a44"/><polygon points="41.5,71.2 39.1,70.2 53.5,37.9" fill="#2e8a3a"/><polygon points="40.4,66.1 37.5,64.8 60.6,16.9" fill="#3a9a44"/><polygon points="62.8,64.1 60.3,62.1 73.6,48.5" fill="#3a9a44"/><polygon points="50.5,67.4 48.8,65.3 78.6,43.0" fill="#2e8a3a"/><polygon points="59.4,64.6 58.0,65.8 42.2,46.5" fill="#2a7a34"/><polygon points="54.9,68.4 51.6,67.9 59.3,31.1" fill="#2e8a3a"/><path d="M47.4 10 L49.5 24 M70 14 L62 27 M33 25 L40 33" stroke="#e8e8e0" stroke-width="1.2" stroke-dasharray="1 1" fill="none"/></g></g></svg>
<div class="a cap" style="left:494px;top:514px">1344, Bush (733kB)</div>
<svg class="a img" style="left:694px;top:403px" width="136" height="100"><g transform="translate(51,-3)"><path d="M18 44 L17.5 76.3" stroke="#5a4a3a" stroke-width="1.5"/><polygon points="13.7,8.6 21.6,9.4 26.6,17.3 28,28.8 25.9,40.3 18.7,46 11.5,40.3 8.6,31.7 9.4,15.8" fill="#0c1a12"/><circle cx="17.5" cy="45.5" r="1.5" fill="#0c1a12"/><circle cx="21.3" cy="42.8" r="1.0" fill="#0c1a12"/><circle cx="17.2" cy="10.0" r="1.0" fill="#0c1a12"/><circle cx="15.6" cy="45.2" r="1.3" fill="#0c1a12"/><circle cx="26.4" cy="29.0" r="1.5" fill="#0c1a12"/><circle cx="21.4" cy="10.4" r="1.4" fill="#0c1a12"/><circle cx="26.7" cy="22.2" r="1.5" fill="#0c1a12"/><circle cx="8.9" cy="29.0" r="1.1" fill="#0c1a12"/><circle cx="12.3" cy="40.3" r="0.9" fill="#0c1a12"/><circle cx="21.9" cy="10.4" r="1.4" fill="#0c1a12"/><circle cx="9.4" cy="22.0" r="1.3" fill="#0c1a12"/><circle cx="10.2" cy="33.3" r="1.2" fill="#0c1a12"/><circle cx="17.8" cy="45.3" r="1.1" fill="#0c1a12"/><circle cx="24.0" cy="39.8" r="1.0" fill="#0c1a12"/><circle cx="20.9" cy="42.9" r="1.3" fill="#0c1a12"/><circle cx="26.3" cy="22.3" r="1.5" fill="#0c1a12"/><circle cx="26.0" cy="32.4" r="1.5" fill="#0c1a12"/><circle cx="12.7" cy="14.2" r="1.5" fill="#0c1a12"/><circle cx="24.9" cy="16.5" r="1.5" fill="#0c1a12"/><circle cx="11.6" cy="39.2" r="1.6" fill="#0c1a12"/><circle cx="10.8" cy="17.3" r="1.3" fill="#0c1a12"/><circle cx="10.2" cy="19.1" r="1.4" fill="#0c1a12"/><circle cx="13.4" cy="41.5" r="1.3" fill="#0c1a12"/><circle cx="24.4" cy="38.1" r="1.3" fill="#0c1a12"/><circle cx="9.7" cy="21.9" r="1.2" fill="#0c1a12"/><circle cx="13.5" cy="41.0" r="1.6" fill="#0c1a12"/><circle cx="24.1" cy="39.2" r="1.3" fill="#0c1a12"/><circle cx="25.7" cy="35.5" r="1.5" fill="#0c1a12"/><circle cx="26.5" cy="28.1" r="1.6" fill="#0c1a12"/><circle cx="9.3" cy="25.6" r="1.0" fill="#0c1a12"/><circle cx="26.6" cy="31.2" r="1.4" fill="#0c1a12"/><circle cx="17.5" cy="46.0" r="1.0" fill="#0c1a12"/><circle cx="10.7" cy="18.6" r="1.0" fill="#0c1a12"/><circle cx="20.5" cy="43.1" r="1.1" fill="#0c1a12"/><circle cx="25.8" cy="36.7" r="0.8" fill="#0c1a12"/><circle cx="19.2" cy="10.2" r="1.2" fill="#0c1a12"/><circle cx="13.8" cy="42.6" r="0.9" fill="#0c1a12"/><circle cx="23.4" cy="13.6" r="1.0" fill="#0c1a12"/><circle cx="15.2" cy="42.9" r="0.9" fill="#0c1a12"/><circle cx="12.4" cy="41.7" r="1.6" fill="#0c1a12"/><circle cx="10.7" cy="28.7" r="0.5" fill="#5a7a6a" opacity="0.8"/><circle cx="23.7" cy="21.6" r="0.8" fill="#5a7a6a" opacity="0.8"/><circle cx="19.3" cy="15.1" r="0.4" fill="#5a7a6a" opacity="0.8"/><circle cx="14.2" cy="39.6" r="0.5" fill="#5a7a6a" opacity="0.8"/><circle cx="18.1" cy="23.3" r="0.5" fill="#5a7a6a" opacity="0.8"/><circle cx="23.6" cy="18.1" r="0.7" fill="#5a7a6a" opacity="0.8"/><circle cx="18.8" cy="41.4" r="0.6" fill="#5a7a6a" opacity="0.8"/><circle cx="19.7" cy="31.5" r="0.7" fill="#5a7a6a" opacity="0.8"/><circle cx="12.3" cy="28.6" r="0.7" fill="#5a7a6a" opacity="0.8"/><circle cx="19.1" cy="20.9" r="0.8" fill="#5a7a6a" opacity="0.8"/><circle cx="15.1" cy="13.9" r="0.4" fill="#5a7a6a" opacity="0.8"/><circle cx="11.8" cy="34.6" r="0.7" fill="#5a7a6a" opacity="0.8"/><circle cx="17.2" cy="31.5" r="0.7" fill="#5a7a6a" opacity="0.8"/><circle cx="22.2" cy="20.6" r="0.7" fill="#5a7a6a" opacity="0.8"/><circle cx="11.9" cy="21.2" r="0.8" fill="#5a7a6a" opacity="0.8"/><circle cx="18.0" cy="19.8" r="0.7" fill="#5a7a6a" opacity="0.8"/><circle cx="15.6" cy="41.9" r="0.5" fill="#5a7a6a" opacity="0.8"/><circle cx="23.0" cy="27.0" r="0.5" fill="#5a7a6a" opacity="0.8"/><circle cx="17.8" cy="40.8" r="0.6" fill="#5a7a6a" opacity="0.8"/><circle cx="13.3" cy="23.4" r="0.6" fill="#5a7a6a" opacity="0.8"/><circle cx="13.2" cy="29.9" r="0.4" fill="#5a7a6a" opacity="0.8"/><circle cx="24.0" cy="16.9" r="0.4" fill="#5a7a6a" opacity="0.8"/><circle cx="20.0" cy="21.1" r="0.8" fill="#5a7a6a" opacity="0.8"/><circle cx="18.4" cy="28.2" r="0.7" fill="#5a7a6a" opacity="0.8"/><circle cx="13.6" cy="35.6" r="0.7" fill="#5a7a6a" opacity="0.8"/><circle cx="17.3" cy="42.7" r="0.4" fill="#5a7a6a" opacity="0.8"/><circle cx="10.9" cy="27.5" r="0.8" fill="#5a7a6a" opacity="0.8"/><circle cx="14.4" cy="27.1" r="0.6" fill="#5a7a6a" opacity="0.8"/><circle cx="14.1" cy="28.5" r="0.4" fill="#5a7a6a" opacity="0.8"/><circle cx="17.6" cy="36.1" r="0.5" fill="#5a7a6a" opacity="0.8"/><circle cx="21.9" cy="25.1" r="0.8" fill="#5a7a6a" opacity="0.8"/><circle cx="23.9" cy="38.4" r="0.7" fill="#5a7a6a" opacity="0.8"/></g></svg>
<div class="a cap" style="left:673px;top:514px">1344, Pine</div>
</div>
</body></html>
